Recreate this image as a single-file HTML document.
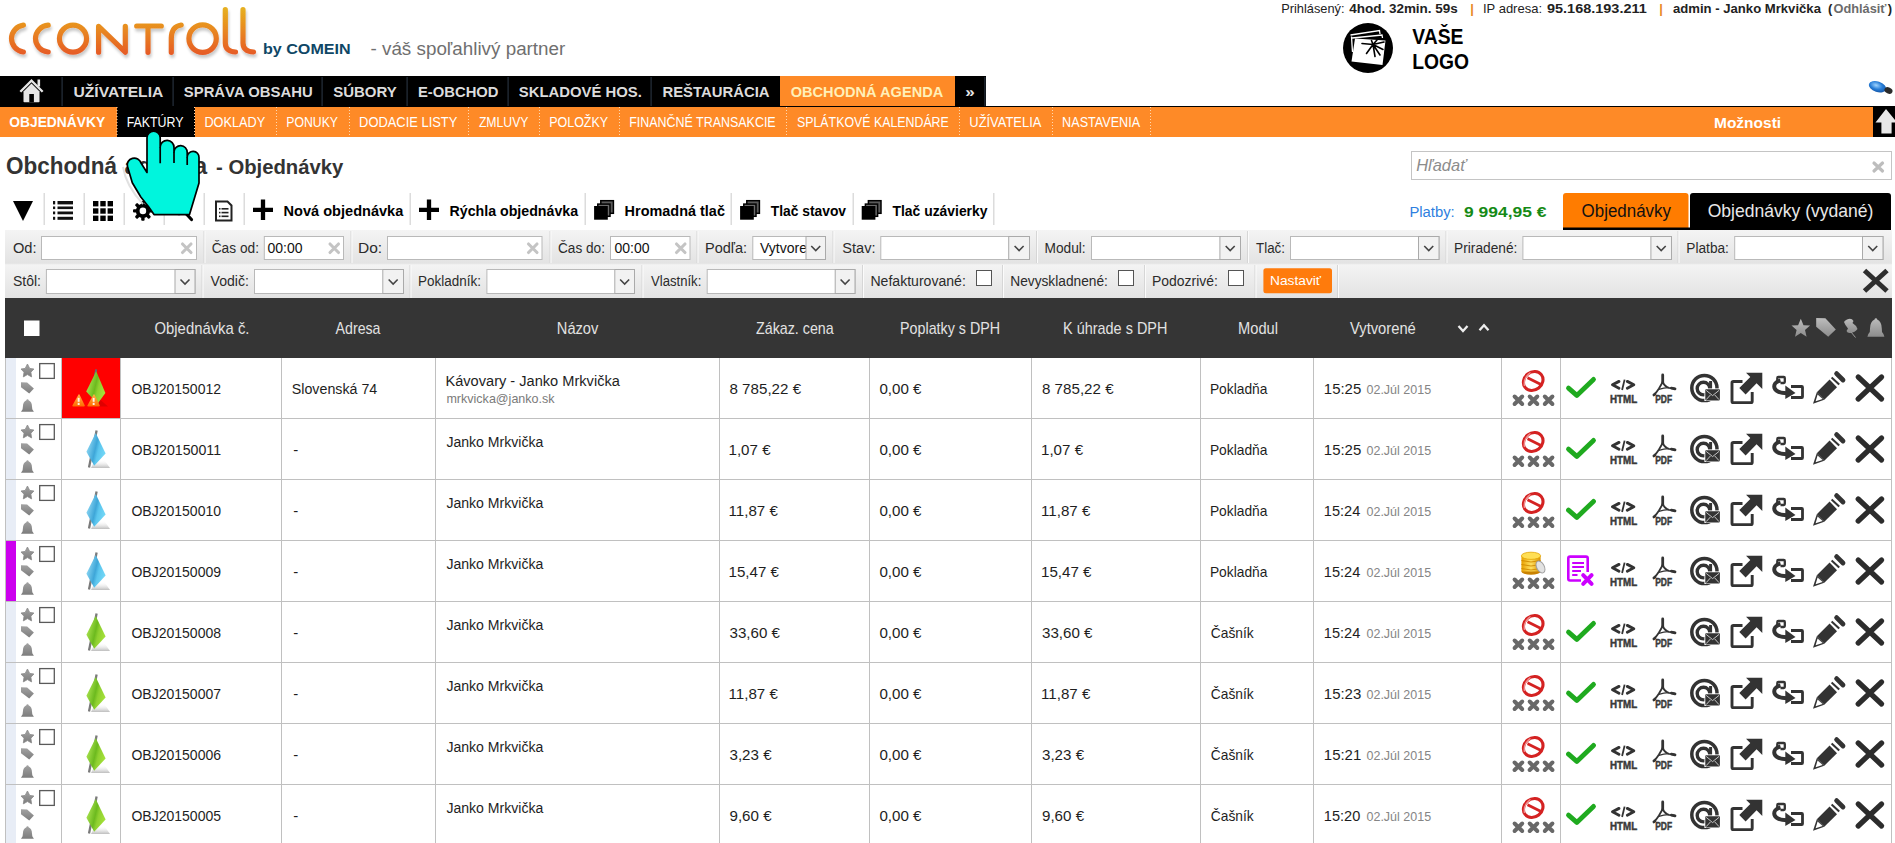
<!DOCTYPE html>
<html><head><meta charset="utf-8"><title>Obchodná agenda - Objednávky</title>
<style>html,body{margin:0;padding:0;background:#fff;overflow:hidden;width:1895px;height:843px}svg{display:block}text{white-space:pre}</style></head>
<body><svg width="1895" height="843" viewBox="0 0 1895 843">
<defs>
<linearGradient id="lg" x1="0" y1="0" x2="0" y2="1"><stop offset="0" stop-color="#eeaa22"/><stop offset="1" stop-color="#e8592a"/></linearGradient>
<linearGradient id="fg" x1="0" y1="0" x2="0" y2="1"><stop offset="0" stop-color="#f4f4f4"/><stop offset="1" stop-color="#e3e3e3"/></linearGradient>
<linearGradient id="gicon" x1="0" y1="0" x2="0" y2="1"><stop offset="0" stop-color="#a2a2a2"/><stop offset="1" stop-color="#7c7c7c"/></linearGradient>
<linearGradient id="hgicon" x1="0" y1="0" x2="0" y2="1"><stop offset="0" stop-color="#8a8a8a"/><stop offset="1" stop-color="#5a5a5a"/></linearGradient>
<linearGradient id="hgicon2" x1="0" y1="0" x2="0" y2="1"><stop offset="0" stop-color="#bdbdbd"/><stop offset="1" stop-color="#8c8c8c"/></linearGradient>
<linearGradient id="blueflag" x1="0" y1="0.2" x2="1" y2="0.6"><stop offset="0" stop-color="#9fe2fa"/><stop offset="0.5" stop-color="#3ea6d8"/><stop offset="0.65" stop-color="#5cc6ee"/><stop offset="1" stop-color="#74d8f6"/></linearGradient>
<linearGradient id="greenflag" x1="0" y1="0.2" x2="1" y2="0.6"><stop offset="0" stop-color="#b8ec5c"/><stop offset="0.5" stop-color="#6cba1e"/><stop offset="0.65" stop-color="#8fd030"/><stop offset="1" stop-color="#a6e23a"/></linearGradient>
<linearGradient id="flagsh" x1="0" y1="0" x2="0" y2="1"><stop offset="0" stop-color="#fff" stop-opacity="0"/><stop offset="1" stop-color="#bdbdbd"/></linearGradient>
<linearGradient id="warn" x1="0" y1="0" x2="0" y2="1"><stop offset="0" stop-color="#ffb347"/><stop offset="1" stop-color="#ff6a00"/></linearGradient>
<linearGradient id="coin" x1="0" y1="0" x2="1" y2="0"><stop offset="0" stop-color="#e8a000"/><stop offset="0.5" stop-color="#ffe060"/><stop offset="1" stop-color="#d89000"/></linearGradient>
<radialGradient id="mouse" cx="0.4" cy="0.4" r="0.7"><stop offset="0" stop-color="#9fd4ff"/><stop offset="0.5" stop-color="#2a7fd8"/><stop offset="1" stop-color="#0e4e9e"/></radialGradient>
<filter id="sh" x="-10%" y="-20%" width="130%" height="160%"><feGaussianBlur in="SourceAlpha" stdDeviation="1.6"/><feOffset dx="0.5" dy="2.5"/><feComponentTransfer><feFuncA type="linear" slope="0.22"/></feComponentTransfer><feMerge><feMergeNode/><feMergeNode in="SourceGraphic"/></feMerge></filter>
<linearGradient id="lgu" gradientUnits="userSpaceOnUse" x1="0" y1="8" x2="0" y2="55"><stop offset="0" stop-color="#e6b020"/><stop offset="0.35" stop-color="#e8921f"/><stop offset="1" stop-color="#e65a26"/></linearGradient>
<symbol id="star" viewBox="0 0 24 24"><path d="M12 1.5l3.1 6.6 7.2.9-5.3 4.9 1.4 7.1L12 17.5l-6.4 3.5 1.4-7.1L1.7 9l7.2-.9z"/></symbol>
</defs>
<g filter="url(#sh)" fill="none" stroke="url(#lgu)" stroke-width="5.2" stroke-linecap="round" stroke-linejoin="round"><path d="M23.4,25.2 A13.8,13.5 0 0 0 11.5,38.6 A13.8,13.5 0 0 0 23.4,52"/><path d="M48.2,25.2 A13.8,13.5 0 0 0 35.5,38.6 A13.8,13.5 0 0 0 48.2,52"/><ellipse cx="73" cy="38.6" rx="13.55" ry="13.5"/><path d="M98.6,52.2 L98.6,26.3 L125.3,52.2 L125.3,26.3"/><path d="M136.7,26 L161.3,26 M148,26 L148,52.3"/><path d="M171.3,52.3 L171.3,38 Q171.5,26.5 181.2,25"/><ellipse cx="202.6" cy="38.6" rx="13.7" ry="13.7"/><path d="M225.3,9.7 L225.3,43 Q225.5,51.5 235.5,52"/><path d="M243,9.7 L243,43 Q243.2,51.5 253.6,52"/></g>
<text transform="translate(263.00,54) scale(1.1495,1)" style="font-family:'Liberation Sans';font-size:14px;font-weight:bold;" fill="#0f4766" >by COMEIN</text>
<text transform="translate(370.50,55.4) scale(1.0175,1)" style="font-family:'Liberation Sans';font-size:18.5px;" fill="#6f6f6f" >- váš spoľahlivý partner</text>
<text transform="translate(1281.21,13) scale(0.9857,1)" style="font-family:'Liberation Sans';font-size:13px;" fill="#222" >Prihlásený:</text>
<text transform="translate(1349.20,13) scale(1.0380,1)" style="font-family:'Liberation Sans';font-size:13px;font-weight:bold;" fill="#222" >4hod. 32min. 59s</text>
<text x="1470.30" y="13" style="font-family:'Liberation Sans';font-size:13px;font-weight:bold;" fill="#e8891f" >|</text>
<text x="1483.00" y="13" style="font-family:'Liberation Sans';font-size:13px;" fill="#222" >IP adresa:</text>
<text transform="translate(1547.00,13) scale(1.1128,1)" style="font-family:'Liberation Sans';font-size:13px;font-weight:bold;" fill="#222" >95.168.193.211</text>
<text x="1659.20" y="13" style="font-family:'Liberation Sans';font-size:13px;font-weight:bold;" fill="#e8891f" >|</text>
<text transform="translate(1673.00,13) scale(1.0099,1)" style="font-family:'Liberation Sans';font-size:13px;font-weight:bold;" fill="#222" >admin - Janko Mrkvička</text>
<text x="1828.00" y="13" style="font-family:'Liberation Sans';font-size:13px;font-weight:bold;" fill="#222" >(</text>
<text transform="translate(1833.50,13) scale(0.9821,1)" style="font-family:'Liberation Sans';font-size:13px;font-weight:bold;" fill="#6b6b6b" >Odhlásiť</text>
<text x="1887.80" y="13" style="font-family:'Liberation Sans';font-size:13px;font-weight:bold;" fill="#222" >)</text>
<circle cx="1368" cy="48" r="25" fill="#000"/>
<g fill="none" stroke="#fff" stroke-width="1.3"><path d="M1350.5,35 L1379.5,30.5 L1380,34"/><path d="M1351.5,36.5 L1352.5,52"/><path d="M1352,38 L1382,35 L1382.5,38"/></g>
<path d="M1355,38.5 L1385.5,40.5 L1382.5,65 L1351.5,61.5 Z" fill="#fff"/>
<g stroke="#000" stroke-width="1.6" stroke-linecap="round" fill="none"><path d="M1362,43.5 L1373,44.5 M1373,44.5 L1384,42 M1373,44.5 L1383,49.5 M1373,44.5 L1380,55 M1373,44.5 L1375,56.5 M1373,44.5 L1366.5,53.5 M1373,44.5 L1371.5,40.5 M1373,44.5 L1377,40"/></g>
<text transform="translate(1412.30,44.1) scale(0.8575,1)" style="font-family:'Liberation Sans';font-size:22.5px;font-weight:bold;" fill="#000" >VAŠE</text>
<text transform="translate(1412.14,69) scale(0.8572,1)" style="font-family:'Liberation Sans';font-size:22.5px;font-weight:bold;" fill="#000" >LOGO</text>
<ellipse cx="1877.5" cy="86.8" rx="9" ry="5.2" transform="rotate(18 1877.5 86.8)" fill="url(#mouse)"/>
<ellipse cx="1888.5" cy="90.5" rx="4.2" ry="3" transform="rotate(25 1888.5 90.5)" fill="#2b2b2b"/>
<rect x="0" y="76" width="986" height="31" fill="#000" />
<rect x="0" y="106" width="1895" height="1" fill="#000" />
<rect x="780" y="76" width="175" height="30" fill="#fe8a27" />
<rect x="61.5" y="77" width="1.2" height="29" fill="#26303c"/>
<rect x="172.5" y="77" width="1.2" height="29" fill="#26303c"/>
<rect x="321.5" y="77" width="1.2" height="29" fill="#26303c"/>
<rect x="406.5" y="77" width="1.2" height="29" fill="#26303c"/>
<rect x="507.5" y="77" width="1.2" height="29" fill="#26303c"/>
<rect x="650.5" y="77" width="1.2" height="29" fill="#26303c"/>
<rect x="984.3" y="77" width="1.2" height="29" fill="#26303c"/>
<g fill="#e6e6e6"><path d="M19.5,91 L31.5,79 L43.5,91 L41.8,92.6 L31.5,82.3 L21.2,92.6 Z"/><rect x="37.5" y="79.5" width="2.6" height="7"/><path d="M23.5,91.5 L31.5,83.5 L39.5,91.5 L39.5,101.5 Q39.5,102.3 38.7,102.3 L24.3,102.3 Q23.5,102.3 23.5,101.5 Z"/></g>
<rect x="29.3" y="94" width="4.6" height="8.3" fill="#000"/>
<text transform="translate(73.50,97) scale(1.0580,1)" style="font-family:'Liberation Sans';font-size:14.8px;font-weight:bold;" fill="#dcdcdc" >UŽÍVATELIA</text>
<text transform="translate(183.80,97) scale(1.0046,1)" style="font-family:'Liberation Sans';font-size:14.8px;font-weight:bold;" fill="#dcdcdc" >SPRÁVA OBSAHU</text>
<text transform="translate(333.20,97) scale(1.0145,1)" style="font-family:'Liberation Sans';font-size:14.8px;font-weight:bold;" fill="#dcdcdc" >SÚBORY</text>
<text x="418.00" y="97" style="font-family:'Liberation Sans';font-size:14.8px;font-weight:bold;" fill="#dcdcdc" >E-OBCHOD</text>
<text transform="translate(518.80,97) scale(1.0050,1)" style="font-family:'Liberation Sans';font-size:14.8px;font-weight:bold;" fill="#dcdcdc" >SKLADOVÉ HOS.</text>
<text transform="translate(662.40,97) scale(1.0065,1)" style="font-family:'Liberation Sans';font-size:14.8px;font-weight:bold;" fill="#dcdcdc" >REŠTAURÁCIA</text>
<text transform="translate(790.70,97) scale(0.9860,1)" style="font-family:'Liberation Sans';font-size:14.8px;font-weight:bold;" fill="#fff0b8" >OBCHODNÁ AGENDA</text>
<text transform="translate(965.30,96.5) scale(1.2125,1)" style="font-family:'Liberation Sans';font-size:14px;font-weight:bold;" fill="#e6e6e6" >»</text>
<rect x="0" y="107" width="1873" height="30" fill="#fe8a27" />
<rect x="1873" y="107" width="22" height="30" fill="#000" />
<rect x="117" y="107" width="78" height="30" fill="#000" />
<path d="M1886,109 L1897,122.5 L1891.6,122.5 L1891.6,133.4 L1881.4,133.4 L1881.4,122.5 L1875.5,122.5 Z" fill="#e8e8e8"/>
<line x1="117" y1="107" x2="117" y2="137" stroke="#ffd9b0" stroke-width="1" stroke-dasharray="1,2"/>
<line x1="194.5" y1="107" x2="194.5" y2="137" stroke="#ffd9b0" stroke-width="1" stroke-dasharray="1,2"/>
<line x1="276.5" y1="107" x2="276.5" y2="137" stroke="#ffd9b0" stroke-width="1" stroke-dasharray="1,2"/>
<line x1="349.5" y1="107" x2="349.5" y2="137" stroke="#ffd9b0" stroke-width="1" stroke-dasharray="1,2"/>
<line x1="468.5" y1="107" x2="468.5" y2="137" stroke="#ffd9b0" stroke-width="1" stroke-dasharray="1,2"/>
<line x1="539.5" y1="107" x2="539.5" y2="137" stroke="#ffd9b0" stroke-width="1" stroke-dasharray="1,2"/>
<line x1="619.5" y1="107" x2="619.5" y2="137" stroke="#ffd9b0" stroke-width="1" stroke-dasharray="1,2"/>
<line x1="786.5" y1="107" x2="786.5" y2="137" stroke="#ffd9b0" stroke-width="1" stroke-dasharray="1,2"/>
<line x1="959.5" y1="107" x2="959.5" y2="137" stroke="#ffd9b0" stroke-width="1" stroke-dasharray="1,2"/>
<line x1="1052.5" y1="107" x2="1052.5" y2="137" stroke="#ffd9b0" stroke-width="1" stroke-dasharray="1,2"/>
<line x1="1150.5" y1="107" x2="1150.5" y2="137" stroke="#ffd9b0" stroke-width="1" stroke-dasharray="1,2"/>
<text transform="translate(9.25,127) scale(0.9531,1)" style="font-family:'Liberation Sans';font-size:14.5px;font-weight:bold;" fill="#fff" >OBJEDNÁVKY</text>
<text transform="translate(126.63,127) scale(0.8658,1)" style="font-family:'Liberation Sans';font-size:14.3px;" fill="#fff" >FAKTÚRY</text>
<text transform="translate(204.41,127) scale(0.8909,1)" style="font-family:'Liberation Sans';font-size:14.3px;" fill="#fff" >DOKLADY</text>
<text transform="translate(286.34,127) scale(0.8573,1)" style="font-family:'Liberation Sans';font-size:14.3px;" fill="#fff" >PONUKY</text>
<text transform="translate(359.10,127) scale(0.9030,1)" style="font-family:'Liberation Sans';font-size:14.3px;" fill="#fff" >DODACIE LISTY</text>
<text transform="translate(478.90,127) scale(0.8554,1)" style="font-family:'Liberation Sans';font-size:14.3px;" fill="#fff" >ZMLUVY</text>
<text transform="translate(549.13,127) scale(0.8747,1)" style="font-family:'Liberation Sans';font-size:14.3px;" fill="#fff" >POLOŽKY</text>
<text transform="translate(629.13,127) scale(0.8719,1)" style="font-family:'Liberation Sans';font-size:14.3px;" fill="#fff" >FINANČNÉ TRANSAKCIE</text>
<text transform="translate(797.00,127) scale(0.8648,1)" style="font-family:'Liberation Sans';font-size:14.3px;" fill="#fff" >SPLÁTKOVÉ KALENDÁRE</text>
<text transform="translate(969.30,127) scale(0.9044,1)" style="font-family:'Liberation Sans';font-size:14.3px;" fill="#fff" >UŽÍVATELIA</text>
<text transform="translate(1062.12,127) scale(0.8827,1)" style="font-family:'Liberation Sans';font-size:14.3px;" fill="#fff" >NASTAVENIA</text>
<text transform="translate(1713.97,127.5) scale(1.0342,1)" style="font-family:'Liberation Sans';font-size:15px;font-weight:bold;" fill="#fff" >Možnosti</text>
<text transform="translate(5.90,174) scale(0.9378,1)" style="font-family:'Liberation Sans';font-size:24px;font-weight:bold;" fill="#333" >Obchodná</text>
<text transform="translate(124.50,174) scale(0.9838,1)" style="font-family:'Liberation Sans';font-size:24px;font-weight:bold;" fill="#333" >agenda</text>
<text transform="translate(216.00,174) scale(1.0407,1)" style="font-family:'Liberation Sans';font-size:19.5px;font-weight:bold;" fill="#333" >- Objednávky</text>
<rect x="1411.5" y="151.5" width="480" height="28" fill="#fff" stroke="#c4c4c4" stroke-width="1"/>
<text transform="translate(1416.20,171.1) scale(1.0286,1)" style="font-family:'Liberation Sans';font-size:16px;font-style:italic;" fill="#8c8c8c" >Hľadať</text>
<path d="M1874,163 L1882.5,171 M1882.5,163 L1874,171" stroke="#bdbdbd" stroke-width="3.2" stroke-linecap="round"/>
<rect x="43.5" y="193" width="1.5" height="32" fill="#dcdcdc"/>
<rect x="83.5" y="193" width="1.5" height="32" fill="#dcdcdc"/>
<rect x="123.5" y="193" width="1.5" height="32" fill="#dcdcdc"/>
<rect x="163.5" y="193" width="1.5" height="32" fill="#dcdcdc"/>
<rect x="203.5" y="193" width="1.5" height="32" fill="#dcdcdc"/>
<rect x="243.5" y="193" width="1.5" height="32" fill="#dcdcdc"/>
<rect x="409.5" y="193" width="1.5" height="32" fill="#dcdcdc"/>
<rect x="584.5" y="193" width="1.5" height="32" fill="#dcdcdc"/>
<rect x="730.5" y="193" width="1.5" height="32" fill="#dcdcdc"/>
<rect x="852.5" y="193" width="1.5" height="32" fill="#dcdcdc"/>
<rect x="993.0" y="193" width="1.5" height="32" fill="#dcdcdc"/>
<path d="M13,201 L33,201 L23,221 Z" fill="#000"/>
<g fill="#111"><rect x="53" y="201" width="2.2" height="3.4"/><rect x="57.5" y="201" width="15.5" height="3.4"/><rect x="53" y="206.5" width="2.2" height="2.6"/><rect x="57.5" y="206.5" width="15.5" height="2.6"/><rect x="53" y="211.5" width="2.2" height="2.8"/><rect x="57.5" y="211.5" width="15.5" height="2.8"/><rect x="53" y="216.8" width="2.2" height="3"/><rect x="57.5" y="216.8" width="15.5" height="3"/></g>
<g fill="#000"><rect x="93.0" y="201.0" width="5.4" height="5.4"/><rect x="100.3" y="201.0" width="5.4" height="5.4"/><rect x="107.6" y="201.0" width="5.4" height="5.4"/><rect x="93.0" y="208.3" width="5.4" height="5.4"/><rect x="100.3" y="208.3" width="5.4" height="5.4"/><rect x="107.6" y="208.3" width="5.4" height="5.4"/><rect x="93.0" y="215.6" width="5.4" height="5.4"/><rect x="100.3" y="215.6" width="5.4" height="5.4"/><rect x="107.6" y="215.6" width="5.4" height="5.4"/></g>
<g transform="translate(142.9,210.9)" fill="#000"><rect x="-1.7" y="-9.9" width="3.4" height="5" rx="1" transform="rotate(0)"/><rect x="-1.7" y="-9.9" width="3.4" height="5" rx="1" transform="rotate(45)"/><rect x="-1.7" y="-9.9" width="3.4" height="5" rx="1" transform="rotate(90)"/><rect x="-1.7" y="-9.9" width="3.4" height="5" rx="1" transform="rotate(135)"/><rect x="-1.7" y="-9.9" width="3.4" height="5" rx="1" transform="rotate(180)"/><rect x="-1.7" y="-9.9" width="3.4" height="5" rx="1" transform="rotate(225)"/><rect x="-1.7" y="-9.9" width="3.4" height="5" rx="1" transform="rotate(270)"/><rect x="-1.7" y="-9.9" width="3.4" height="5" rx="1" transform="rotate(315)"/><circle r="7.1"/><circle r="3.3" fill="#fff"/></g>
<g fill="none" stroke="#000" stroke-width="2.6"><circle cx="179" cy="206.5" r="7.5"/><path d="M185,212.5 L191.5,219.5" stroke-width="3.2" stroke-linecap="round"/></g>
<path d="M216,201.5 L227.5,201.5 L231.5,205.5 L231.5,220.5 L216,220.5 Z" fill="none" stroke="#222" stroke-width="2"/>
<g fill="#222"><rect x="219" y="208" width="1.5" height="1.6"/><rect x="221.5" y="208" width="7" height="1.6"/><rect x="219" y="211.8" width="1.5" height="1.6"/><rect x="221.5" y="211.8" width="7" height="1.6"/><rect x="219" y="215.5" width="1.5" height="1.6"/><rect x="221.5" y="215.5" width="7" height="1.6"/></g>
<path d="M253,209.8 L273,209.8 M263,199.6 L263,220" stroke="#000" stroke-width="4.3"/>
<path d="M419,209.8 L439,209.8 M429,199.6 L429,220" stroke="#000" stroke-width="4.3"/>
<text transform="translate(283.60,215.9) scale(1.0410,1)" style="font-family:'Liberation Sans';font-size:14px;font-weight:bold;" fill="#000" >Nová objednávka</text>
<text transform="translate(449.50,215.9) scale(1.0146,1)" style="font-family:'Liberation Sans';font-size:14px;font-weight:bold;" fill="#000" >Rýchla objednávka</text>
<g transform="translate(594,199.6)"><rect x="6.8" y="1.1" width="12.6" height="12.6" fill="#5a5a5a" stroke="#000" stroke-width="1.5"/><rect x="3.8" y="4.5" width="12.2" height="12.2" fill="#6a6a6a" stroke="#000" stroke-width="1.5"/><rect x="0.1" y="6.4" width="13.7" height="13.7" fill="#000"/></g>
<g transform="translate(740,199.6)"><rect x="6.8" y="1.1" width="12.6" height="12.6" fill="#5a5a5a" stroke="#000" stroke-width="1.5"/><rect x="3.8" y="4.5" width="12.2" height="12.2" fill="#6a6a6a" stroke="#000" stroke-width="1.5"/><rect x="0.1" y="6.4" width="13.7" height="13.7" fill="#000"/></g>
<g transform="translate(861.6,199.6)"><rect x="6.8" y="1.1" width="12.6" height="12.6" fill="#5a5a5a" stroke="#000" stroke-width="1.5"/><rect x="3.8" y="4.5" width="12.2" height="12.2" fill="#6a6a6a" stroke="#000" stroke-width="1.5"/><rect x="0.1" y="6.4" width="13.7" height="13.7" fill="#000"/></g>
<text transform="translate(624.60,215.9) scale(1.0322,1)" style="font-family:'Liberation Sans';font-size:14px;font-weight:bold;" fill="#000" >Hromadná tlač</text>
<text transform="translate(770.70,215.9) scale(0.9899,1)" style="font-family:'Liberation Sans';font-size:14px;font-weight:bold;" fill="#000" >Tlač stavov</text>
<text transform="translate(892.50,215.9) scale(0.9934,1)" style="font-family:'Liberation Sans';font-size:14px;font-weight:bold;" fill="#000" >Tlač uzávierky</text>
<text transform="translate(1409.44,216.8) scale(0.9561,1)" style="font-family:'Liberation Sans';font-size:15.5px;" fill="#2e7fe0" >Platby:</text>
<text transform="translate(1464.00,216.8) scale(1.1271,1)" style="font-family:'Liberation Sans';font-size:15.5px;font-weight:bold;" fill="#158a15" >9 994,95 €</text>
<path d="M1563,229 L1563,196 Q1563,193 1566,193 L1685.5,193 Q1688.5,193 1688.5,196 L1688.5,229 Z" fill="#ff7c00"/>
<path d="M1690,229 L1690,196 Q1690,193 1693,193 L1888,193 Q1891,193 1891,196 L1891,229 Z" fill="#000"/>
<rect x="1563" y="227.5" width="328" height="2.5" fill="#000" />
<text transform="translate(1581.60,216.8) scale(0.9152,1)" style="font-family:'Liberation Sans';font-size:18.5px;" fill="#111" >Objednávky</text>
<text transform="translate(1707.70,216.8) scale(0.9488,1)" style="font-family:'Liberation Sans';font-size:18.5px;" fill="#e8e8e8" >Objednávky (vydané)</text>
<rect x="5" y="230" width="1887" height="34" fill="url(#fg)" />
<rect x="5" y="264" width="1887" height="34" fill="url(#fg)" />
<rect x="5" y="263.5" width="1887" height="0.8" fill="#e9e9e9" />
<rect x="203.5" y="231" width="1" height="32" fill="#d6d6d6"/><rect x="204.5" y="231" width="1" height="32" fill="#fbfbfb"/>
<rect x="350.5" y="231" width="1" height="32" fill="#d6d6d6"/><rect x="351.5" y="231" width="1" height="32" fill="#fbfbfb"/>
<rect x="549.5" y="231" width="1" height="32" fill="#d6d6d6"/><rect x="550.5" y="231" width="1" height="32" fill="#fbfbfb"/>
<rect x="696.5" y="231" width="1" height="32" fill="#d6d6d6"/><rect x="697.5" y="231" width="1" height="32" fill="#fbfbfb"/>
<rect x="832.5" y="231" width="1" height="32" fill="#d6d6d6"/><rect x="833.5" y="231" width="1" height="32" fill="#fbfbfb"/>
<rect x="1036.0" y="231" width="1" height="32" fill="#d6d6d6"/><rect x="1037.0" y="231" width="1" height="32" fill="#fbfbfb"/>
<rect x="1247.0" y="231" width="1" height="32" fill="#d6d6d6"/><rect x="1248.0" y="231" width="1" height="32" fill="#fbfbfb"/>
<rect x="1445.5" y="231" width="1" height="32" fill="#d6d6d6"/><rect x="1446.5" y="231" width="1" height="32" fill="#fbfbfb"/>
<rect x="1677.5" y="231" width="1" height="32" fill="#d6d6d6"/><rect x="1678.5" y="231" width="1" height="32" fill="#fbfbfb"/>
<rect x="201.5" y="265" width="1" height="33" fill="#d6d6d6"/><rect x="202.5" y="265" width="1" height="33" fill="#fbfbfb"/>
<rect x="409.5" y="265" width="1" height="33" fill="#d6d6d6"/><rect x="410.5" y="265" width="1" height="33" fill="#fbfbfb"/>
<rect x="641.5" y="265" width="1" height="33" fill="#d6d6d6"/><rect x="642.5" y="265" width="1" height="33" fill="#fbfbfb"/>
<rect x="862.0" y="265" width="1" height="33" fill="#d6d6d6"/><rect x="863.0" y="265" width="1" height="33" fill="#fbfbfb"/>
<rect x="1002.0" y="265" width="1" height="33" fill="#d6d6d6"/><rect x="1003.0" y="265" width="1" height="33" fill="#fbfbfb"/>
<rect x="1144.0" y="265" width="1" height="33" fill="#d6d6d6"/><rect x="1145.0" y="265" width="1" height="33" fill="#fbfbfb"/>
<rect x="1254.5" y="265" width="1" height="33" fill="#d6d6d6"/><rect x="1255.5" y="265" width="1" height="33" fill="#fbfbfb"/>
<rect x="1337.0" y="265" width="1" height="33" fill="#d6d6d6"/><rect x="1338.0" y="265" width="1" height="33" fill="#fbfbfb"/>
<text transform="translate(12.90,252.8) scale(1.0115,1)" style="font-family:'Liberation Sans';font-size:14.5px;" fill="#2b2b2b" >Od:</text>
<rect x="41.5" y="236.5" width="155" height="23" fill="#fff" stroke="#b9b9b9" stroke-width="1"/>
<path d="M182.5,244 L191.0,252.5 M191.0,244 L182.5,252.5" stroke="#c4c4c4" stroke-width="3.1" stroke-linecap="round"/>
<text transform="translate(211.70,252.8) scale(0.9460,1)" style="font-family:'Liberation Sans';font-size:14.5px;" fill="#2b2b2b" >Čas od:</text>
<rect x="264.3" y="236.5" width="79.19999999999999" height="23" fill="#fff" stroke="#b9b9b9" stroke-width="1"/>
<text x="267.50" y="253.3" style="font-family:'Liberation Sans';font-size:14px;" fill="#111" >00:00</text>
<path d="M330,244 L338.5,252.5 M338.5,244 L330,252.5" stroke="#c4c4c4" stroke-width="3.1" stroke-linecap="round"/>
<text transform="translate(357.93,252.8) scale(1.0713,1)" style="font-family:'Liberation Sans';font-size:14.5px;" fill="#2b2b2b" >Do:</text>
<rect x="387.5" y="236.5" width="154.5" height="23" fill="#fff" stroke="#b9b9b9" stroke-width="1"/>
<path d="M528.5,244 L537.0,252.5 M537.0,244 L528.5,252.5" stroke="#c4c4c4" stroke-width="3.1" stroke-linecap="round"/>
<text transform="translate(558.00,252.8) scale(0.9399,1)" style="font-family:'Liberation Sans';font-size:14.5px;" fill="#2b2b2b" >Čas do:</text>
<rect x="610.5" y="236.5" width="79.5" height="23" fill="#fff" stroke="#b9b9b9" stroke-width="1"/>
<text x="614.50" y="253.3" style="font-family:'Liberation Sans';font-size:14px;" fill="#111" >00:00</text>
<path d="M676.5,244 L685.0,252.5 M685.0,244 L676.5,252.5" stroke="#c4c4c4" stroke-width="3.1" stroke-linecap="round"/>
<text x="705.00" y="252.8" style="font-family:'Liberation Sans';font-size:14.5px;" fill="#2b2b2b" >Podľa:</text>
<rect x="752.8" y="236.5" width="72.70000000000005" height="23" fill="#fff" stroke="#b9b9b9" stroke-width="1"/>
<rect x="806.0" y="236.5" width="19.5" height="23" fill="#f2f2f2" stroke="#aaaaaa" stroke-width="1"/>
<path d="M811.25,246.0 L815.75,250.5 L820.25,246.0" fill="none" stroke="#444" stroke-width="1.6"/>
<clipPath id="cp752"><rect x="752.3" y="236" width="53.200000000000045" height="24"/></clipPath>
<text x="760.00" y="253.3" style="font-family:'Liberation Sans';font-size:14px;" fill="#111" clip-path="url(#cp752)">Vytvorené</text>
<text transform="translate(842.30,252.8) scale(1.0058,1)" style="font-family:'Liberation Sans';font-size:14.5px;" fill="#2b2b2b" >Stav:</text>
<rect x="880.8" y="236.5" width="148.70000000000005" height="23" fill="#fff" stroke="#b9b9b9" stroke-width="1"/>
<rect x="1008.7" y="236.5" width="20.799999999999955" height="23" fill="#f2f2f2" stroke="#aaaaaa" stroke-width="1"/>
<path d="M1014.6,246.0 L1019.1,250.5 L1023.6,246.0" fill="none" stroke="#444" stroke-width="1.6"/>
<text transform="translate(1044.45,252.8) scale(0.9472,1)" style="font-family:'Liberation Sans';font-size:14.5px;" fill="#2b2b2b" >Modul:</text>
<rect x="1091.5" y="236.5" width="149" height="23" fill="#fff" stroke="#b9b9b9" stroke-width="1"/>
<rect x="1219.9" y="236.5" width="20.59999999999991" height="23" fill="#f2f2f2" stroke="#aaaaaa" stroke-width="1"/>
<path d="M1225.7,246.0 L1230.2,250.5 L1234.7,246.0" fill="none" stroke="#444" stroke-width="1.6"/>
<text transform="translate(1256.00,252.8) scale(0.9213,1)" style="font-family:'Liberation Sans';font-size:14.5px;" fill="#2b2b2b" >Tlač:</text>
<rect x="1290.5" y="236.5" width="148.5" height="23" fill="#fff" stroke="#b9b9b9" stroke-width="1"/>
<rect x="1418.5" y="236.5" width="20.5" height="23" fill="#f2f2f2" stroke="#aaaaaa" stroke-width="1"/>
<path d="M1424.25,246.0 L1428.75,250.5 L1433.25,246.0" fill="none" stroke="#444" stroke-width="1.6"/>
<text transform="translate(1454.05,252.8) scale(0.9465,1)" style="font-family:'Liberation Sans';font-size:14.5px;" fill="#2b2b2b" >Priradené:</text>
<rect x="1522.9" y="236.5" width="148.5999999999999" height="23" fill="#fff" stroke="#b9b9b9" stroke-width="1"/>
<rect x="1650.9" y="236.5" width="20.59999999999991" height="23" fill="#f2f2f2" stroke="#aaaaaa" stroke-width="1"/>
<path d="M1656.7,246.0 L1661.2,250.5 L1665.7,246.0" fill="none" stroke="#444" stroke-width="1.6"/>
<text transform="translate(1686.36,252.8) scale(0.9440,1)" style="font-family:'Liberation Sans';font-size:14.5px;" fill="#2b2b2b" >Platba:</text>
<rect x="1734.7" y="236.5" width="148.29999999999995" height="23" fill="#fff" stroke="#b9b9b9" stroke-width="1"/>
<rect x="1862.5" y="236.5" width="20.5" height="23" fill="#f2f2f2" stroke="#aaaaaa" stroke-width="1"/>
<path d="M1868.25,246.0 L1872.75,250.5 L1877.25,246.0" fill="none" stroke="#444" stroke-width="1.6"/>
<text transform="translate(12.90,285.6) scale(0.9684,1)" style="font-family:'Liberation Sans';font-size:14.5px;" fill="#2b2b2b" >Stôl:</text>
<rect x="46.4" y="269.5" width="148.6" height="24" fill="#fff" stroke="#b9b9b9" stroke-width="1"/>
<rect x="175.0" y="269.5" width="20.0" height="24" fill="#f2f2f2" stroke="#aaaaaa" stroke-width="1"/>
<path d="M180.5,279.5 L185.0,284.0 L189.5,279.5" fill="none" stroke="#444" stroke-width="1.6"/>
<text transform="translate(210.60,285.6) scale(0.9722,1)" style="font-family:'Liberation Sans';font-size:14.5px;" fill="#2b2b2b" >Vodič:</text>
<rect x="254.5" y="269.5" width="149" height="24" fill="#fff" stroke="#b9b9b9" stroke-width="1"/>
<rect x="382.8" y="269.5" width="20.69999999999999" height="24" fill="#f2f2f2" stroke="#aaaaaa" stroke-width="1"/>
<path d="M388.65,279.5 L393.15,284.0 L397.65,279.5" fill="none" stroke="#444" stroke-width="1.6"/>
<text transform="translate(418.07,285.6) scale(0.9288,1)" style="font-family:'Liberation Sans';font-size:14.5px;" fill="#2b2b2b" >Pokladník:</text>
<rect x="486.9" y="269.5" width="147.60000000000002" height="24" fill="#fff" stroke="#b9b9b9" stroke-width="1"/>
<rect x="614.8" y="269.5" width="19.700000000000045" height="24" fill="#f2f2f2" stroke="#aaaaaa" stroke-width="1"/>
<path d="M620.15,279.5 L624.65,284.0 L629.15,279.5" fill="none" stroke="#444" stroke-width="1.6"/>
<text transform="translate(651.00,285.6) scale(0.9051,1)" style="font-family:'Liberation Sans';font-size:14.5px;" fill="#2b2b2b" >Vlastník:</text>
<rect x="707.2" y="269.5" width="147.79999999999995" height="24" fill="#fff" stroke="#b9b9b9" stroke-width="1"/>
<rect x="835.2" y="269.5" width="19.799999999999955" height="24" fill="#f2f2f2" stroke="#aaaaaa" stroke-width="1"/>
<path d="M840.6,279.5 L845.1,284.0 L849.6,279.5" fill="none" stroke="#444" stroke-width="1.6"/>
<text transform="translate(870.43,285.6) scale(0.9709,1)" style="font-family:'Liberation Sans';font-size:14.5px;" fill="#2b2b2b" >Nefakturované:</text>
<rect x="976.5" y="270.5" width="15" height="15" fill="#fff" stroke="#555" stroke-width="1"/>
<text transform="translate(1010.25,285.6) scale(0.9472,1)" style="font-family:'Liberation Sans';font-size:14.5px;" fill="#2b2b2b" >Nevyskladnené:</text>
<rect x="1118.5" y="270.5" width="15" height="15" fill="#fff" stroke="#555" stroke-width="1"/>
<text transform="translate(1152.04,285.6) scale(0.9627,1)" style="font-family:'Liberation Sans';font-size:14.5px;" fill="#2b2b2b" >Podozrivé:</text>
<rect x="1228.5" y="270.5" width="15" height="15" fill="#fff" stroke="#555" stroke-width="1"/>
<rect x="1263.4" y="268.2" width="68.6" height="25.1" rx="2.5" fill="#ff7b0c"/>
<text transform="translate(1269.98,285) scale(1.0197,1)" style="font-family:'Liberation Sans';font-size:13.5px;" fill="#fff" >Nastaviť</text>
<path d="M1864.5,270.5 L1887,291 M1887,270.5 L1864.5,291" stroke="#2e2e2e" stroke-width="5"/>
<rect x="5" y="298" width="1887" height="60" fill="#353535" />
<rect x="24" y="320.5" width="15.5" height="15.5" fill="#fff" />
<text transform="translate(154.50,334.3) scale(0.9408,1)" style="font-family:'Liberation Sans';font-size:15.8px;" fill="#e2e2e2" >Objednávka č.</text>
<text transform="translate(335.60,334.3) scale(0.8972,1)" style="font-family:'Liberation Sans';font-size:15.8px;" fill="#e2e2e2" >Adresa</text>
<text transform="translate(556.87,334.3) scale(0.9253,1)" style="font-family:'Liberation Sans';font-size:15.8px;" fill="#e2e2e2" >Názov</text>
<text transform="translate(756.00,334.3) scale(0.9042,1)" style="font-family:'Liberation Sans';font-size:15.8px;" fill="#e2e2e2" >Zákaz. cena</text>
<text transform="translate(900.10,334.3) scale(0.9038,1)" style="font-family:'Liberation Sans';font-size:15.8px;" fill="#e2e2e2" >Poplatky s DPH</text>
<text transform="translate(1063.09,334.3) scale(0.9137,1)" style="font-family:'Liberation Sans';font-size:15.8px;" fill="#e2e2e2" >K úhrade s DPH</text>
<text transform="translate(1238.07,334.3) scale(0.9274,1)" style="font-family:'Liberation Sans';font-size:15.8px;" fill="#e2e2e2" >Modul</text>
<text transform="translate(1350.00,334.3) scale(0.9328,1)" style="font-family:'Liberation Sans';font-size:15.8px;" fill="#e2e2e2" >Vytvorené</text>
<path d="M1458.5,326 L1463,331 L1467.5,326" fill="none" stroke="#eee" stroke-width="2.3"/>
<path d="M1479.5,330.2 L1484,325.2 L1488.5,330.2" fill="none" stroke="#eee" stroke-width="2.3"/>
<g fill="url(#hgicon2)"><path d="M1800.8,318.8 L1803.5,325.3 L1810.1,325.6 L1805,330 L1806.6,336.8 L1800.8,333 L1795,336.8 L1796.6,330 L1791.5,325.6 L1798.1,325.3 Z"/><path d="M1816.2,318 L1825.4,318.2 L1835.8,329.5 L1828.2,336.8 L1816.2,326.7 Z"/><path d="M1847,319.5 Q1851.5,317.5 1853.5,321 L1852.5,323 Q1856.5,325.5 1857.5,329 Q1855,332.5 1850.5,333 Q1847.5,333.5 1846.5,331 L1848,328.5 Q1845,325 1844,322 Q1844.5,320.5 1847,319.5 Z"/><path d="M1875.9,318.2 Q1877.2,318.2 1877.2,319.6 Q1881.6,321.6 1881.8,328.5 L1882,332 Q1884.4,334.6 1884.4,336.8 L1867.4,336.8 Q1867.4,334.6 1869.8,332 L1870,328.5 Q1870.2,321.6 1874.6,319.6 Q1874.6,318.2 1875.9,318.2 Z"/></g>
<path d="M1851,332 L1855.5,337.5" stroke="#9a9a9a" stroke-width="1"/>
<rect x="5" y="358" width="1887" height="60" fill="#fff" />
<rect x="6" y="358" width="10" height="60" fill="#e8edf6" />
<rect x="5" y="418" width="1887" height="1" fill="#c0c0c0" />
<g transform="translate(0,358)"><g fill="url(#gicon)"><path d="M27.45,6 L29.7,10.4 L33.9,11 L30.9,14.2 L31.6,18.9 L27.45,16.6 L23.3,18.9 L24,14.2 L21,11 L25.2,10.4 Z" stroke="#8a8a8a" stroke-width="0.8" stroke-linejoin="round"/><path d="M21,24.2 L27.1,24.6 L33.9,30.6 L29.2,35.6 L21,29.2 Z"/><path d="M27.5,41.2 Q28.6,41.2 28.6,42.3 Q31.9,43.6 32,48.5 L32.3,51.2 L33.9,53.8 L21,53.8 L22.6,51.2 L22.9,48.5 Q23,43.6 26.4,42.3 Q26.4,41.2 27.5,41.2 Z"/></g><rect x="39.7" y="5.6" width="14.6" height="14.8" fill="#fff" stroke="#5a5a5a" stroke-width="1.3"/></g>
<rect x="62" y="358" width="58" height="60" fill="#ff0000" />
<g transform="translate(0,358)"><path d="M96,38 L108,48.5 L92,48.5 Z" fill="#c00000" opacity="0.5"/><path d="M96.2,11.4 L93.5,25" stroke="#667" stroke-width="2"/><path d="M96.2,13.2 L86.2,33.5 L97.6,45.7 L105.4,34.9 Z" fill="url(#greenflag)"/></g>
<g transform="translate(0,358)"><path d="M78.5,36.5 Q79.1,36 79.6,36.7 L84.8,47.6 Q84.89999999999999,48.6 83.89999999999999,48.6 L73.2,48.6 Q72.2,48.6 72.39999999999999,47.6 Z" fill="url(#warn)"/><rect x="77.7" y="39.9" width="1.9" height="3.9" fill="#fff" opacity="0.9"/><rect x="77.7" y="44.8" width="1.9" height="2.2" fill="#fff" opacity="0.9"/></g>
<g transform="translate(0,358)"><path d="M93.5,36.5 Q94.1,36 94.6,36.7 L99.8,47.6 Q99.89999999999999,48.6 98.89999999999999,48.6 L88.2,48.6 Q87.2,48.6 87.39999999999999,47.6 Z" fill="url(#warn)"/><rect x="92.7" y="39.9" width="1.9" height="3.9" fill="#fff" opacity="0.9"/><rect x="92.7" y="44.8" width="1.9" height="2.2" fill="#fff" opacity="0.9"/></g>
<text transform="translate(131.40,393.5) scale(0.9355,1)" style="font-family:'Liberation Sans';font-size:15px;" fill="#1e1e1e" >OBJ20150012</text>
<text transform="translate(291.80,393.5) scale(0.9497,1)" style="font-family:'Liberation Sans';font-size:15px;" fill="#1e1e1e" >Slovenská 74</text>
<text transform="translate(445.43,385.7) scale(0.9739,1)" style="font-family:'Liberation Sans';font-size:15px;" fill="#1e1e1e" >Kávovary - Janko Mrkvička</text>
<text transform="translate(446.40,402.7) scale(0.9657,1)" style="font-family:'Liberation Sans';font-size:13px;" fill="#7a7a7a" >mrkvicka@janko.sk</text>
<text transform="translate(729.50,393.5) scale(1.0100,1)" style="font-family:'Liberation Sans';font-size:15px;" fill="#1e1e1e" >8 785,22 €</text>
<text transform="translate(879.40,393.5) scale(1.0100,1)" style="font-family:'Liberation Sans';font-size:15px;" fill="#1e1e1e" >0,00 €</text>
<text transform="translate(1042.00,393.5) scale(1.0100,1)" style="font-family:'Liberation Sans';font-size:15px;" fill="#1e1e1e" >8 785,22 €</text>
<text transform="translate(1209.88,393.5) scale(0.9200,1)" style="font-family:'Liberation Sans';font-size:15px;" fill="#1e1e1e" >Pokladňa</text>
<text transform="translate(1323.83,393.6) scale(0.9659,1)" style="font-family:'Liberation Sans';font-size:15.5px;" fill="#1e1e1e" >15:25</text>
<text transform="translate(1366.50,393.6) scale(0.9613,1)" style="font-family:'Liberation Sans';font-size:13px;" fill="#858585" >02.Júl 2015</text>
<g transform="translate(0,358)"><ellipse cx="1533.2" cy="23" rx="10.3" ry="8.9" transform="rotate(-38 1533.2 23)" fill="none" stroke="#d42222" stroke-width="3.1"/><path d="M1527.5,19.8 L1541,26.5" stroke="#d42222" stroke-width="2.8"/><path d="M1524.5,28 Q1523,20 1530.5,14.5" fill="none" stroke="#f39a9a" stroke-width="1.4" opacity="0.9"/></g>
<g transform="translate(0,358)"><g stroke="#5c5c5c" stroke-width="4" stroke-linecap="round" opacity="0.92"><path d="M1514.6,38.5 L1522.2,46 M1522.2,38.5 L1514.6,46"/><path d="M1529.7,38.5 L1537.3,46 M1537.3,38.5 L1529.7,46"/><path d="M1544.8,38.5 L1552.4,46 M1552.4,38.5 L1544.8,46"/></g></g>
<g transform="translate(0,358)"><path d="M1568.5,30.1 L1576.8,37.4 L1593.5,21.4" fill="none" stroke="#1faa1f" stroke-width="4.8" stroke-linecap="round" stroke-linejoin="round"/></g>
<g transform="translate(0,358)"><g fill="none" stroke="#333" stroke-width="2.9" stroke-linecap="round" stroke-linejoin="round"><path d="M1619,23.4 L1612.5,26.8 L1619,30.2"/><path d="M1627.3,23.4 L1633.8,26.8 L1627.3,30.2"/></g><path d="M1624.6,21.6 L1622.1,32" stroke="#333" stroke-width="1.8"/></g>
<text transform="translate(1610.00,402.6) scale(0.9761,1)" style="font-family:'Liberation Sans';font-size:10px;font-weight:bold;" fill="#3a3a3a" stroke="#3a3a3a" stroke-width="0.45">HTML</text>
<g transform="translate(0,358)"><g fill="none" stroke="#333" stroke-linecap="round"><path d="M1662.7,17 L1662.7,24.5" stroke-width="2.8"/><path d="M1662.7,24 L1659,30.5 Q1656.5,34.5 1654,36.8" stroke-width="1.8"/><path d="M1655,36 L1653.8,37" stroke-width="2.6"/><path d="M1662.7,24 Q1665,29 1669,29.8 L1674.5,30.6" stroke-width="1.8"/><path d="M1671.5,30.2 L1675,30.8" stroke-width="2.8"/><path d="M1658.8,31.3 Q1664,29.8 1668.5,29.7" stroke-width="1.2"/></g></g>
<text transform="translate(1655.20,402.5) scale(0.8446,1)" style="font-family:'Liberation Sans';font-size:10px;font-weight:bold;" fill="#3a3a3a" stroke="#3a3a3a" stroke-width="0.45">PDF</text>
<g transform="translate(0,358)"><circle cx="1704.4" cy="30" r="12.6" fill="none" stroke="#333" stroke-width="3.5"/><circle cx="1703.5" cy="30.6" r="6.3" fill="none" stroke="#333" stroke-width="3.4"/><path d="M1710.6,23 L1710.6,33" stroke="#333" stroke-width="3"/><rect x="1704.4" y="30.4" width="16" height="12.6" fill="#fff"/><rect x="1705.3" y="31.2" width="14.6" height="11.2" rx="0.8" fill="#333"/><path d="M1706.2,32.4 L1712.6,37.6 L1719,32.4 M1706.2,41.6 L1710.4,37 M1719,41.6 L1714.8,37" fill="none" stroke="#d6d6d6" stroke-width="0.9"/></g>
<g transform="translate(0,358)"><path d="M1742.5,23.5 L1733.4,23.5 Q1732,23.5 1732,24.9 L1732,43.2 Q1732,44.6 1733.4,44.6 L1750.8,44.6 Q1752.2,44.6 1752.2,43.2 L1752.2,34" fill="none" stroke="#333" stroke-width="2.9"/><path d="M1762.3,14.7 L1762.3,31 L1756.6,25.3 L1745.6,36.4 L1739.3,30.1 L1750.3,19.1 L1746,14.7 Z" fill="#333"/></g>
<g transform="translate(0,358)"><g fill="none" stroke="#333" stroke-linejoin="round"><path d="M1777.3,23.5 L1777.3,20 Q1777.3,19 1778.3,19 L1783.8,19 Q1784.8,19 1784.8,20 L1784.8,24 Q1784.8,25 1783.8,25 L1780.5,25" stroke-width="2.3"/><path d="M1780.5,22.5 Q1773,24.5 1774.5,30 Q1776.5,35 1787,35.3" stroke-width="4"/><path d="M1791,28.5 L1801.8,28.5 Q1802.5,28.5 1802.5,29.3 L1802.5,38.7 Q1802.5,39.5 1801.8,39.5 L1791,39.5" stroke-width="2.8"/></g><path d="M1785.3,27.5 L1795.5,35 L1785.3,41 Z" fill="#333"/></g>
<g transform="translate(0,358)"><path d="M1816.8,34.2 L1829.6,21.4 L1837,29.2 L1824.3,41.7 Z" fill="#333"/><path d="M1816.8,34.2 L1813,45.7 L1824.3,41.7 Z" fill="#333"/><path d="M1815.6,43.2 L1817.6,36.4 L1822.6,41 Z" fill="#fff"/><path d="M1831.6,19.4 L1839.2,26.6" stroke="#333" stroke-width="2"/><path d="M1836.6,15.6 L1843,22" stroke="#333" stroke-width="4.8" stroke-linecap="round"/></g>
<g transform="translate(0,358)"><path d="M1858.2,19 L1881.6,41 M1881.6,19 L1858.2,41" stroke="#2c2c2c" stroke-width="5.2" stroke-linecap="round"/></g>
<rect x="5" y="419" width="1887" height="60" fill="#fff" />
<rect x="6" y="419" width="10" height="60" fill="#e8edf6" />
<rect x="5" y="479" width="1887" height="1" fill="#c0c0c0" />
<g transform="translate(0,419)"><g fill="url(#gicon)"><path d="M27.45,6 L29.7,10.4 L33.9,11 L30.9,14.2 L31.6,18.9 L27.45,16.6 L23.3,18.9 L24,14.2 L21,11 L25.2,10.4 Z" stroke="#8a8a8a" stroke-width="0.8" stroke-linejoin="round"/><path d="M21,24.2 L27.1,24.6 L33.9,30.6 L29.2,35.6 L21,29.2 Z"/><path d="M27.5,41.2 Q28.6,41.2 28.6,42.3 Q31.9,43.6 32,48.5 L32.3,51.2 L33.9,53.8 L21,53.8 L22.6,51.2 L22.9,48.5 Q23,43.6 26.4,42.3 Q26.4,41.2 27.5,41.2 Z"/></g><rect x="39.7" y="5.6" width="14.6" height="14.8" fill="#fff" stroke="#5a5a5a" stroke-width="1.3"/></g>
<g transform="translate(0,419)"><path d="M91,49 L110,49 L104,40.6 L95,40.6 Z" fill="url(#flagsh)"/><path d="M96.6,11.4 L89,48.4" stroke="#7a7a7a" stroke-width="2.3"/><path d="M95.7,13.9 L86.4,32.8 L94.2,46.7 L105.6,34.5 Z" fill="url(#blueflag)"/></g>
<text transform="translate(131.40,454.5) scale(0.9465,1)" style="font-family:'Liberation Sans';font-size:15px;" fill="#1e1e1e" >OBJ20150011</text>
<text x="293.20" y="454.5" style="font-family:'Liberation Sans';font-size:15px;" fill="#1e1e1e" >-</text>
<text transform="translate(446.40,446.7) scale(0.9383,1)" style="font-family:'Liberation Sans';font-size:15px;" fill="#1e1e1e" >Janko Mrkvička</text>
<text transform="translate(728.49,454.5) scale(1.0100,1)" style="font-family:'Liberation Sans';font-size:15px;" fill="#1e1e1e" >1,07 €</text>
<text transform="translate(879.40,454.5) scale(1.0100,1)" style="font-family:'Liberation Sans';font-size:15px;" fill="#1e1e1e" >0,00 €</text>
<text transform="translate(1040.99,454.5) scale(1.0100,1)" style="font-family:'Liberation Sans';font-size:15px;" fill="#1e1e1e" >1,07 €</text>
<text transform="translate(1209.88,454.5) scale(0.9200,1)" style="font-family:'Liberation Sans';font-size:15px;" fill="#1e1e1e" >Pokladňa</text>
<text transform="translate(1323.83,454.6) scale(0.9659,1)" style="font-family:'Liberation Sans';font-size:15.5px;" fill="#1e1e1e" >15:25</text>
<text transform="translate(1366.50,454.6) scale(0.9613,1)" style="font-family:'Liberation Sans';font-size:13px;" fill="#858585" >02.Júl 2015</text>
<g transform="translate(0,419)"><ellipse cx="1533.2" cy="23" rx="10.3" ry="8.9" transform="rotate(-38 1533.2 23)" fill="none" stroke="#d42222" stroke-width="3.1"/><path d="M1527.5,19.8 L1541,26.5" stroke="#d42222" stroke-width="2.8"/><path d="M1524.5,28 Q1523,20 1530.5,14.5" fill="none" stroke="#f39a9a" stroke-width="1.4" opacity="0.9"/></g>
<g transform="translate(0,419)"><g stroke="#5c5c5c" stroke-width="4" stroke-linecap="round" opacity="0.92"><path d="M1514.6,38.5 L1522.2,46 M1522.2,38.5 L1514.6,46"/><path d="M1529.7,38.5 L1537.3,46 M1537.3,38.5 L1529.7,46"/><path d="M1544.8,38.5 L1552.4,46 M1552.4,38.5 L1544.8,46"/></g></g>
<g transform="translate(0,419)"><path d="M1568.5,30.1 L1576.8,37.4 L1593.5,21.4" fill="none" stroke="#1faa1f" stroke-width="4.8" stroke-linecap="round" stroke-linejoin="round"/></g>
<g transform="translate(0,419)"><g fill="none" stroke="#333" stroke-width="2.9" stroke-linecap="round" stroke-linejoin="round"><path d="M1619,23.4 L1612.5,26.8 L1619,30.2"/><path d="M1627.3,23.4 L1633.8,26.8 L1627.3,30.2"/></g><path d="M1624.6,21.6 L1622.1,32" stroke="#333" stroke-width="1.8"/></g>
<text transform="translate(1610.00,463.6) scale(0.9761,1)" style="font-family:'Liberation Sans';font-size:10px;font-weight:bold;" fill="#3a3a3a" stroke="#3a3a3a" stroke-width="0.45">HTML</text>
<g transform="translate(0,419)"><g fill="none" stroke="#333" stroke-linecap="round"><path d="M1662.7,17 L1662.7,24.5" stroke-width="2.8"/><path d="M1662.7,24 L1659,30.5 Q1656.5,34.5 1654,36.8" stroke-width="1.8"/><path d="M1655,36 L1653.8,37" stroke-width="2.6"/><path d="M1662.7,24 Q1665,29 1669,29.8 L1674.5,30.6" stroke-width="1.8"/><path d="M1671.5,30.2 L1675,30.8" stroke-width="2.8"/><path d="M1658.8,31.3 Q1664,29.8 1668.5,29.7" stroke-width="1.2"/></g></g>
<text transform="translate(1655.20,463.5) scale(0.8446,1)" style="font-family:'Liberation Sans';font-size:10px;font-weight:bold;" fill="#3a3a3a" stroke="#3a3a3a" stroke-width="0.45">PDF</text>
<g transform="translate(0,419)"><circle cx="1704.4" cy="30" r="12.6" fill="none" stroke="#333" stroke-width="3.5"/><circle cx="1703.5" cy="30.6" r="6.3" fill="none" stroke="#333" stroke-width="3.4"/><path d="M1710.6,23 L1710.6,33" stroke="#333" stroke-width="3"/><rect x="1704.4" y="30.4" width="16" height="12.6" fill="#fff"/><rect x="1705.3" y="31.2" width="14.6" height="11.2" rx="0.8" fill="#333"/><path d="M1706.2,32.4 L1712.6,37.6 L1719,32.4 M1706.2,41.6 L1710.4,37 M1719,41.6 L1714.8,37" fill="none" stroke="#d6d6d6" stroke-width="0.9"/></g>
<g transform="translate(0,419)"><path d="M1742.5,23.5 L1733.4,23.5 Q1732,23.5 1732,24.9 L1732,43.2 Q1732,44.6 1733.4,44.6 L1750.8,44.6 Q1752.2,44.6 1752.2,43.2 L1752.2,34" fill="none" stroke="#333" stroke-width="2.9"/><path d="M1762.3,14.7 L1762.3,31 L1756.6,25.3 L1745.6,36.4 L1739.3,30.1 L1750.3,19.1 L1746,14.7 Z" fill="#333"/></g>
<g transform="translate(0,419)"><g fill="none" stroke="#333" stroke-linejoin="round"><path d="M1777.3,23.5 L1777.3,20 Q1777.3,19 1778.3,19 L1783.8,19 Q1784.8,19 1784.8,20 L1784.8,24 Q1784.8,25 1783.8,25 L1780.5,25" stroke-width="2.3"/><path d="M1780.5,22.5 Q1773,24.5 1774.5,30 Q1776.5,35 1787,35.3" stroke-width="4"/><path d="M1791,28.5 L1801.8,28.5 Q1802.5,28.5 1802.5,29.3 L1802.5,38.7 Q1802.5,39.5 1801.8,39.5 L1791,39.5" stroke-width="2.8"/></g><path d="M1785.3,27.5 L1795.5,35 L1785.3,41 Z" fill="#333"/></g>
<g transform="translate(0,419)"><path d="M1816.8,34.2 L1829.6,21.4 L1837,29.2 L1824.3,41.7 Z" fill="#333"/><path d="M1816.8,34.2 L1813,45.7 L1824.3,41.7 Z" fill="#333"/><path d="M1815.6,43.2 L1817.6,36.4 L1822.6,41 Z" fill="#fff"/><path d="M1831.6,19.4 L1839.2,26.6" stroke="#333" stroke-width="2"/><path d="M1836.6,15.6 L1843,22" stroke="#333" stroke-width="4.8" stroke-linecap="round"/></g>
<g transform="translate(0,419)"><path d="M1858.2,19 L1881.6,41 M1881.6,19 L1858.2,41" stroke="#2c2c2c" stroke-width="5.2" stroke-linecap="round"/></g>
<rect x="5" y="480" width="1887" height="60" fill="#fff" />
<rect x="6" y="480" width="10" height="60" fill="#e8edf6" />
<rect x="5" y="540" width="1887" height="1" fill="#c0c0c0" />
<g transform="translate(0,480)"><g fill="url(#gicon)"><path d="M27.45,6 L29.7,10.4 L33.9,11 L30.9,14.2 L31.6,18.9 L27.45,16.6 L23.3,18.9 L24,14.2 L21,11 L25.2,10.4 Z" stroke="#8a8a8a" stroke-width="0.8" stroke-linejoin="round"/><path d="M21,24.2 L27.1,24.6 L33.9,30.6 L29.2,35.6 L21,29.2 Z"/><path d="M27.5,41.2 Q28.6,41.2 28.6,42.3 Q31.9,43.6 32,48.5 L32.3,51.2 L33.9,53.8 L21,53.8 L22.6,51.2 L22.9,48.5 Q23,43.6 26.4,42.3 Q26.4,41.2 27.5,41.2 Z"/></g><rect x="39.7" y="5.6" width="14.6" height="14.8" fill="#fff" stroke="#5a5a5a" stroke-width="1.3"/></g>
<g transform="translate(0,480)"><path d="M91,49 L110,49 L104,40.6 L95,40.6 Z" fill="url(#flagsh)"/><path d="M96.6,11.4 L89,48.4" stroke="#7a7a7a" stroke-width="2.3"/><path d="M95.7,13.9 L86.4,32.8 L94.2,46.7 L105.6,34.5 Z" fill="url(#blueflag)"/></g>
<text transform="translate(131.40,515.5) scale(0.9355,1)" style="font-family:'Liberation Sans';font-size:15px;" fill="#1e1e1e" >OBJ20150010</text>
<text x="293.20" y="515.5" style="font-family:'Liberation Sans';font-size:15px;" fill="#1e1e1e" >-</text>
<text transform="translate(446.40,507.7) scale(0.9383,1)" style="font-family:'Liberation Sans';font-size:15px;" fill="#1e1e1e" >Janko Mrkvička</text>
<text transform="translate(728.49,515.5) scale(1.0100,1)" style="font-family:'Liberation Sans';font-size:15px;" fill="#1e1e1e" >11,87 €</text>
<text transform="translate(879.40,515.5) scale(1.0100,1)" style="font-family:'Liberation Sans';font-size:15px;" fill="#1e1e1e" >0,00 €</text>
<text transform="translate(1040.99,515.5) scale(1.0100,1)" style="font-family:'Liberation Sans';font-size:15px;" fill="#1e1e1e" >11,87 €</text>
<text transform="translate(1209.88,515.5) scale(0.9200,1)" style="font-family:'Liberation Sans';font-size:15px;" fill="#1e1e1e" >Pokladňa</text>
<text transform="translate(1323.86,515.6) scale(0.9406,1)" style="font-family:'Liberation Sans';font-size:15.5px;" fill="#1e1e1e" >15:24</text>
<text transform="translate(1366.50,515.6) scale(0.9613,1)" style="font-family:'Liberation Sans';font-size:13px;" fill="#858585" >02.Júl 2015</text>
<g transform="translate(0,480)"><ellipse cx="1533.2" cy="23" rx="10.3" ry="8.9" transform="rotate(-38 1533.2 23)" fill="none" stroke="#d42222" stroke-width="3.1"/><path d="M1527.5,19.8 L1541,26.5" stroke="#d42222" stroke-width="2.8"/><path d="M1524.5,28 Q1523,20 1530.5,14.5" fill="none" stroke="#f39a9a" stroke-width="1.4" opacity="0.9"/></g>
<g transform="translate(0,480)"><g stroke="#5c5c5c" stroke-width="4" stroke-linecap="round" opacity="0.92"><path d="M1514.6,38.5 L1522.2,46 M1522.2,38.5 L1514.6,46"/><path d="M1529.7,38.5 L1537.3,46 M1537.3,38.5 L1529.7,46"/><path d="M1544.8,38.5 L1552.4,46 M1552.4,38.5 L1544.8,46"/></g></g>
<g transform="translate(0,480)"><path d="M1568.5,30.1 L1576.8,37.4 L1593.5,21.4" fill="none" stroke="#1faa1f" stroke-width="4.8" stroke-linecap="round" stroke-linejoin="round"/></g>
<g transform="translate(0,480)"><g fill="none" stroke="#333" stroke-width="2.9" stroke-linecap="round" stroke-linejoin="round"><path d="M1619,23.4 L1612.5,26.8 L1619,30.2"/><path d="M1627.3,23.4 L1633.8,26.8 L1627.3,30.2"/></g><path d="M1624.6,21.6 L1622.1,32" stroke="#333" stroke-width="1.8"/></g>
<text transform="translate(1610.00,524.6) scale(0.9761,1)" style="font-family:'Liberation Sans';font-size:10px;font-weight:bold;" fill="#3a3a3a" stroke="#3a3a3a" stroke-width="0.45">HTML</text>
<g transform="translate(0,480)"><g fill="none" stroke="#333" stroke-linecap="round"><path d="M1662.7,17 L1662.7,24.5" stroke-width="2.8"/><path d="M1662.7,24 L1659,30.5 Q1656.5,34.5 1654,36.8" stroke-width="1.8"/><path d="M1655,36 L1653.8,37" stroke-width="2.6"/><path d="M1662.7,24 Q1665,29 1669,29.8 L1674.5,30.6" stroke-width="1.8"/><path d="M1671.5,30.2 L1675,30.8" stroke-width="2.8"/><path d="M1658.8,31.3 Q1664,29.8 1668.5,29.7" stroke-width="1.2"/></g></g>
<text transform="translate(1655.20,524.5) scale(0.8446,1)" style="font-family:'Liberation Sans';font-size:10px;font-weight:bold;" fill="#3a3a3a" stroke="#3a3a3a" stroke-width="0.45">PDF</text>
<g transform="translate(0,480)"><circle cx="1704.4" cy="30" r="12.6" fill="none" stroke="#333" stroke-width="3.5"/><circle cx="1703.5" cy="30.6" r="6.3" fill="none" stroke="#333" stroke-width="3.4"/><path d="M1710.6,23 L1710.6,33" stroke="#333" stroke-width="3"/><rect x="1704.4" y="30.4" width="16" height="12.6" fill="#fff"/><rect x="1705.3" y="31.2" width="14.6" height="11.2" rx="0.8" fill="#333"/><path d="M1706.2,32.4 L1712.6,37.6 L1719,32.4 M1706.2,41.6 L1710.4,37 M1719,41.6 L1714.8,37" fill="none" stroke="#d6d6d6" stroke-width="0.9"/></g>
<g transform="translate(0,480)"><path d="M1742.5,23.5 L1733.4,23.5 Q1732,23.5 1732,24.9 L1732,43.2 Q1732,44.6 1733.4,44.6 L1750.8,44.6 Q1752.2,44.6 1752.2,43.2 L1752.2,34" fill="none" stroke="#333" stroke-width="2.9"/><path d="M1762.3,14.7 L1762.3,31 L1756.6,25.3 L1745.6,36.4 L1739.3,30.1 L1750.3,19.1 L1746,14.7 Z" fill="#333"/></g>
<g transform="translate(0,480)"><g fill="none" stroke="#333" stroke-linejoin="round"><path d="M1777.3,23.5 L1777.3,20 Q1777.3,19 1778.3,19 L1783.8,19 Q1784.8,19 1784.8,20 L1784.8,24 Q1784.8,25 1783.8,25 L1780.5,25" stroke-width="2.3"/><path d="M1780.5,22.5 Q1773,24.5 1774.5,30 Q1776.5,35 1787,35.3" stroke-width="4"/><path d="M1791,28.5 L1801.8,28.5 Q1802.5,28.5 1802.5,29.3 L1802.5,38.7 Q1802.5,39.5 1801.8,39.5 L1791,39.5" stroke-width="2.8"/></g><path d="M1785.3,27.5 L1795.5,35 L1785.3,41 Z" fill="#333"/></g>
<g transform="translate(0,480)"><path d="M1816.8,34.2 L1829.6,21.4 L1837,29.2 L1824.3,41.7 Z" fill="#333"/><path d="M1816.8,34.2 L1813,45.7 L1824.3,41.7 Z" fill="#333"/><path d="M1815.6,43.2 L1817.6,36.4 L1822.6,41 Z" fill="#fff"/><path d="M1831.6,19.4 L1839.2,26.6" stroke="#333" stroke-width="2"/><path d="M1836.6,15.6 L1843,22" stroke="#333" stroke-width="4.8" stroke-linecap="round"/></g>
<g transform="translate(0,480)"><path d="M1858.2,19 L1881.6,41 M1881.6,19 L1858.2,41" stroke="#2c2c2c" stroke-width="5.2" stroke-linecap="round"/></g>
<rect x="5" y="541" width="1887" height="60" fill="#fff" />
<rect x="6" y="541" width="10" height="60" fill="#cc00ee" />
<rect x="5" y="601" width="1887" height="1" fill="#c0c0c0" />
<g transform="translate(0,541)"><g fill="url(#gicon)"><path d="M27.45,6 L29.7,10.4 L33.9,11 L30.9,14.2 L31.6,18.9 L27.45,16.6 L23.3,18.9 L24,14.2 L21,11 L25.2,10.4 Z" stroke="#8a8a8a" stroke-width="0.8" stroke-linejoin="round"/><path d="M21,24.2 L27.1,24.6 L33.9,30.6 L29.2,35.6 L21,29.2 Z"/><path d="M27.5,41.2 Q28.6,41.2 28.6,42.3 Q31.9,43.6 32,48.5 L32.3,51.2 L33.9,53.8 L21,53.8 L22.6,51.2 L22.9,48.5 Q23,43.6 26.4,42.3 Q26.4,41.2 27.5,41.2 Z"/></g><rect x="39.7" y="5.6" width="14.6" height="14.8" fill="#fff" stroke="#5a5a5a" stroke-width="1.3"/></g>
<g transform="translate(0,541)"><path d="M91,49 L110,49 L104,40.6 L95,40.6 Z" fill="url(#flagsh)"/><path d="M96.6,11.4 L89,48.4" stroke="#7a7a7a" stroke-width="2.3"/><path d="M95.7,13.9 L86.4,32.8 L94.2,46.7 L105.6,34.5 Z" fill="url(#blueflag)"/></g>
<text transform="translate(131.40,576.5) scale(0.9355,1)" style="font-family:'Liberation Sans';font-size:15px;" fill="#1e1e1e" >OBJ20150009</text>
<text x="293.20" y="576.5" style="font-family:'Liberation Sans';font-size:15px;" fill="#1e1e1e" >-</text>
<text transform="translate(446.40,568.7) scale(0.9383,1)" style="font-family:'Liberation Sans';font-size:15px;" fill="#1e1e1e" >Janko Mrkvička</text>
<text transform="translate(728.49,576.5) scale(1.0100,1)" style="font-family:'Liberation Sans';font-size:15px;" fill="#1e1e1e" >15,47 €</text>
<text transform="translate(879.40,576.5) scale(1.0100,1)" style="font-family:'Liberation Sans';font-size:15px;" fill="#1e1e1e" >0,00 €</text>
<text transform="translate(1040.99,576.5) scale(1.0100,1)" style="font-family:'Liberation Sans';font-size:15px;" fill="#1e1e1e" >15,47 €</text>
<text transform="translate(1209.88,576.5) scale(0.9200,1)" style="font-family:'Liberation Sans';font-size:15px;" fill="#1e1e1e" >Pokladňa</text>
<text transform="translate(1323.86,576.6) scale(0.9406,1)" style="font-family:'Liberation Sans';font-size:15.5px;" fill="#1e1e1e" >15:24</text>
<text transform="translate(1366.50,576.6) scale(0.9613,1)" style="font-family:'Liberation Sans';font-size:13px;" fill="#858585" >02.Júl 2015</text>
<g transform="translate(0,541)"><ellipse cx="1531" cy="30.5" rx="9.6" ry="3.2" fill="#c98200"/><rect x="1521.4" y="15" width="19.2" height="15.5" fill="url(#coin)"/><ellipse cx="1531" cy="14.8" rx="9.6" ry="3.6" fill="#ffdf55" stroke="#e3a400" stroke-width="0.8"/><path d="M1521.4,19.5 Q1531,22.5 1540.6,19.5 M1521.4,23.5 Q1531,26.5 1540.6,23.5 M1521.4,27.5 Q1531,30.5 1540.6,27.5" stroke="#d08a00" stroke-width="0.9" fill="none"/><ellipse cx="1540.5" cy="26" rx="3.8" ry="6.4" transform="rotate(-28 1540.5 26)" fill="#e2e2e2" stroke="#a0a0a0" stroke-width="1"/></g>
<g transform="translate(0,541)"><g stroke="#5c5c5c" stroke-width="4" stroke-linecap="round" opacity="0.92"><path d="M1514.6,38.5 L1522.2,46 M1522.2,38.5 L1514.6,46"/><path d="M1529.7,38.5 L1537.3,46 M1537.3,38.5 L1529.7,46"/><path d="M1544.8,38.5 L1552.4,46 M1552.4,38.5 L1544.8,46"/></g></g>
<g transform="translate(0,541)"><g fill="none" stroke="#cc00ff"><path d="M1581,39.5 L1570,39.5 Q1568.3,39.5 1568.3,37.8 L1568.3,17.3 Q1568.3,15.6 1570,15.6 L1586,15.6 Q1587.7,15.6 1587.7,17.3 L1587.7,31" stroke-width="2.6"/><path d="M1572.2,22 L1584,22 M1572.2,26 L1584,26 M1572.2,30 L1581,30 M1572.2,34 L1577.5,34" stroke-width="1.9"/><path d="M1583.2,34.2 L1591.6,42.8 M1591.6,34.2 L1583.2,42.8" stroke-width="4" stroke-linecap="round"/></g></g>
<g transform="translate(0,541)"><g fill="none" stroke="#333" stroke-width="2.9" stroke-linecap="round" stroke-linejoin="round"><path d="M1619,23.4 L1612.5,26.8 L1619,30.2"/><path d="M1627.3,23.4 L1633.8,26.8 L1627.3,30.2"/></g><path d="M1624.6,21.6 L1622.1,32" stroke="#333" stroke-width="1.8"/></g>
<text transform="translate(1610.00,585.6) scale(0.9761,1)" style="font-family:'Liberation Sans';font-size:10px;font-weight:bold;" fill="#3a3a3a" stroke="#3a3a3a" stroke-width="0.45">HTML</text>
<g transform="translate(0,541)"><g fill="none" stroke="#333" stroke-linecap="round"><path d="M1662.7,17 L1662.7,24.5" stroke-width="2.8"/><path d="M1662.7,24 L1659,30.5 Q1656.5,34.5 1654,36.8" stroke-width="1.8"/><path d="M1655,36 L1653.8,37" stroke-width="2.6"/><path d="M1662.7,24 Q1665,29 1669,29.8 L1674.5,30.6" stroke-width="1.8"/><path d="M1671.5,30.2 L1675,30.8" stroke-width="2.8"/><path d="M1658.8,31.3 Q1664,29.8 1668.5,29.7" stroke-width="1.2"/></g></g>
<text transform="translate(1655.20,585.5) scale(0.8446,1)" style="font-family:'Liberation Sans';font-size:10px;font-weight:bold;" fill="#3a3a3a" stroke="#3a3a3a" stroke-width="0.45">PDF</text>
<g transform="translate(0,541)"><circle cx="1704.4" cy="30" r="12.6" fill="none" stroke="#333" stroke-width="3.5"/><circle cx="1703.5" cy="30.6" r="6.3" fill="none" stroke="#333" stroke-width="3.4"/><path d="M1710.6,23 L1710.6,33" stroke="#333" stroke-width="3"/><rect x="1704.4" y="30.4" width="16" height="12.6" fill="#fff"/><rect x="1705.3" y="31.2" width="14.6" height="11.2" rx="0.8" fill="#333"/><path d="M1706.2,32.4 L1712.6,37.6 L1719,32.4 M1706.2,41.6 L1710.4,37 M1719,41.6 L1714.8,37" fill="none" stroke="#d6d6d6" stroke-width="0.9"/></g>
<g transform="translate(0,541)"><path d="M1742.5,23.5 L1733.4,23.5 Q1732,23.5 1732,24.9 L1732,43.2 Q1732,44.6 1733.4,44.6 L1750.8,44.6 Q1752.2,44.6 1752.2,43.2 L1752.2,34" fill="none" stroke="#333" stroke-width="2.9"/><path d="M1762.3,14.7 L1762.3,31 L1756.6,25.3 L1745.6,36.4 L1739.3,30.1 L1750.3,19.1 L1746,14.7 Z" fill="#333"/></g>
<g transform="translate(0,541)"><g fill="none" stroke="#333" stroke-linejoin="round"><path d="M1777.3,23.5 L1777.3,20 Q1777.3,19 1778.3,19 L1783.8,19 Q1784.8,19 1784.8,20 L1784.8,24 Q1784.8,25 1783.8,25 L1780.5,25" stroke-width="2.3"/><path d="M1780.5,22.5 Q1773,24.5 1774.5,30 Q1776.5,35 1787,35.3" stroke-width="4"/><path d="M1791,28.5 L1801.8,28.5 Q1802.5,28.5 1802.5,29.3 L1802.5,38.7 Q1802.5,39.5 1801.8,39.5 L1791,39.5" stroke-width="2.8"/></g><path d="M1785.3,27.5 L1795.5,35 L1785.3,41 Z" fill="#333"/></g>
<g transform="translate(0,541)"><path d="M1816.8,34.2 L1829.6,21.4 L1837,29.2 L1824.3,41.7 Z" fill="#333"/><path d="M1816.8,34.2 L1813,45.7 L1824.3,41.7 Z" fill="#333"/><path d="M1815.6,43.2 L1817.6,36.4 L1822.6,41 Z" fill="#fff"/><path d="M1831.6,19.4 L1839.2,26.6" stroke="#333" stroke-width="2"/><path d="M1836.6,15.6 L1843,22" stroke="#333" stroke-width="4.8" stroke-linecap="round"/></g>
<g transform="translate(0,541)"><path d="M1858.2,19 L1881.6,41 M1881.6,19 L1858.2,41" stroke="#2c2c2c" stroke-width="5.2" stroke-linecap="round"/></g>
<rect x="5" y="602" width="1887" height="60" fill="#fff" />
<rect x="6" y="602" width="10" height="60" fill="#e8edf6" />
<rect x="5" y="662" width="1887" height="1" fill="#c0c0c0" />
<g transform="translate(0,602)"><g fill="url(#gicon)"><path d="M27.45,6 L29.7,10.4 L33.9,11 L30.9,14.2 L31.6,18.9 L27.45,16.6 L23.3,18.9 L24,14.2 L21,11 L25.2,10.4 Z" stroke="#8a8a8a" stroke-width="0.8" stroke-linejoin="round"/><path d="M21,24.2 L27.1,24.6 L33.9,30.6 L29.2,35.6 L21,29.2 Z"/><path d="M27.5,41.2 Q28.6,41.2 28.6,42.3 Q31.9,43.6 32,48.5 L32.3,51.2 L33.9,53.8 L21,53.8 L22.6,51.2 L22.9,48.5 Q23,43.6 26.4,42.3 Q26.4,41.2 27.5,41.2 Z"/></g><rect x="39.7" y="5.6" width="14.6" height="14.8" fill="#fff" stroke="#5a5a5a" stroke-width="1.3"/></g>
<g transform="translate(0,602)"><path d="M91,49 L110,49 L104,40.6 L95,40.6 Z" fill="url(#flagsh)"/><path d="M96.6,11.4 L89,48.4" stroke="#7a7a7a" stroke-width="2.3"/><path d="M95.7,13.9 L86.4,32.8 L94.2,46.7 L105.6,34.5 Z" fill="url(#greenflag)"/></g>
<text transform="translate(131.40,637.5) scale(0.9355,1)" style="font-family:'Liberation Sans';font-size:15px;" fill="#1e1e1e" >OBJ20150008</text>
<text x="293.20" y="637.5" style="font-family:'Liberation Sans';font-size:15px;" fill="#1e1e1e" >-</text>
<text transform="translate(446.40,629.7) scale(0.9383,1)" style="font-family:'Liberation Sans';font-size:15px;" fill="#1e1e1e" >Janko Mrkvička</text>
<text transform="translate(729.50,637.5) scale(1.0100,1)" style="font-family:'Liberation Sans';font-size:15px;" fill="#1e1e1e" >33,60 €</text>
<text transform="translate(879.40,637.5) scale(1.0100,1)" style="font-family:'Liberation Sans';font-size:15px;" fill="#1e1e1e" >0,00 €</text>
<text transform="translate(1042.00,637.5) scale(1.0100,1)" style="font-family:'Liberation Sans';font-size:15px;" fill="#1e1e1e" >33,60 €</text>
<text transform="translate(1210.80,637.5) scale(0.9200,1)" style="font-family:'Liberation Sans';font-size:15px;" fill="#1e1e1e" >Čašník</text>
<text transform="translate(1323.86,637.6) scale(0.9406,1)" style="font-family:'Liberation Sans';font-size:15.5px;" fill="#1e1e1e" >15:24</text>
<text transform="translate(1366.50,637.6) scale(0.9613,1)" style="font-family:'Liberation Sans';font-size:13px;" fill="#858585" >02.Júl 2015</text>
<g transform="translate(0,602)"><ellipse cx="1533.2" cy="23" rx="10.3" ry="8.9" transform="rotate(-38 1533.2 23)" fill="none" stroke="#d42222" stroke-width="3.1"/><path d="M1527.5,19.8 L1541,26.5" stroke="#d42222" stroke-width="2.8"/><path d="M1524.5,28 Q1523,20 1530.5,14.5" fill="none" stroke="#f39a9a" stroke-width="1.4" opacity="0.9"/></g>
<g transform="translate(0,602)"><g stroke="#5c5c5c" stroke-width="4" stroke-linecap="round" opacity="0.92"><path d="M1514.6,38.5 L1522.2,46 M1522.2,38.5 L1514.6,46"/><path d="M1529.7,38.5 L1537.3,46 M1537.3,38.5 L1529.7,46"/><path d="M1544.8,38.5 L1552.4,46 M1552.4,38.5 L1544.8,46"/></g></g>
<g transform="translate(0,602)"><path d="M1568.5,30.1 L1576.8,37.4 L1593.5,21.4" fill="none" stroke="#1faa1f" stroke-width="4.8" stroke-linecap="round" stroke-linejoin="round"/></g>
<g transform="translate(0,602)"><g fill="none" stroke="#333" stroke-width="2.9" stroke-linecap="round" stroke-linejoin="round"><path d="M1619,23.4 L1612.5,26.8 L1619,30.2"/><path d="M1627.3,23.4 L1633.8,26.8 L1627.3,30.2"/></g><path d="M1624.6,21.6 L1622.1,32" stroke="#333" stroke-width="1.8"/></g>
<text transform="translate(1610.00,646.6) scale(0.9761,1)" style="font-family:'Liberation Sans';font-size:10px;font-weight:bold;" fill="#3a3a3a" stroke="#3a3a3a" stroke-width="0.45">HTML</text>
<g transform="translate(0,602)"><g fill="none" stroke="#333" stroke-linecap="round"><path d="M1662.7,17 L1662.7,24.5" stroke-width="2.8"/><path d="M1662.7,24 L1659,30.5 Q1656.5,34.5 1654,36.8" stroke-width="1.8"/><path d="M1655,36 L1653.8,37" stroke-width="2.6"/><path d="M1662.7,24 Q1665,29 1669,29.8 L1674.5,30.6" stroke-width="1.8"/><path d="M1671.5,30.2 L1675,30.8" stroke-width="2.8"/><path d="M1658.8,31.3 Q1664,29.8 1668.5,29.7" stroke-width="1.2"/></g></g>
<text transform="translate(1655.20,646.5) scale(0.8446,1)" style="font-family:'Liberation Sans';font-size:10px;font-weight:bold;" fill="#3a3a3a" stroke="#3a3a3a" stroke-width="0.45">PDF</text>
<g transform="translate(0,602)"><circle cx="1704.4" cy="30" r="12.6" fill="none" stroke="#333" stroke-width="3.5"/><circle cx="1703.5" cy="30.6" r="6.3" fill="none" stroke="#333" stroke-width="3.4"/><path d="M1710.6,23 L1710.6,33" stroke="#333" stroke-width="3"/><rect x="1704.4" y="30.4" width="16" height="12.6" fill="#fff"/><rect x="1705.3" y="31.2" width="14.6" height="11.2" rx="0.8" fill="#333"/><path d="M1706.2,32.4 L1712.6,37.6 L1719,32.4 M1706.2,41.6 L1710.4,37 M1719,41.6 L1714.8,37" fill="none" stroke="#d6d6d6" stroke-width="0.9"/></g>
<g transform="translate(0,602)"><path d="M1742.5,23.5 L1733.4,23.5 Q1732,23.5 1732,24.9 L1732,43.2 Q1732,44.6 1733.4,44.6 L1750.8,44.6 Q1752.2,44.6 1752.2,43.2 L1752.2,34" fill="none" stroke="#333" stroke-width="2.9"/><path d="M1762.3,14.7 L1762.3,31 L1756.6,25.3 L1745.6,36.4 L1739.3,30.1 L1750.3,19.1 L1746,14.7 Z" fill="#333"/></g>
<g transform="translate(0,602)"><g fill="none" stroke="#333" stroke-linejoin="round"><path d="M1777.3,23.5 L1777.3,20 Q1777.3,19 1778.3,19 L1783.8,19 Q1784.8,19 1784.8,20 L1784.8,24 Q1784.8,25 1783.8,25 L1780.5,25" stroke-width="2.3"/><path d="M1780.5,22.5 Q1773,24.5 1774.5,30 Q1776.5,35 1787,35.3" stroke-width="4"/><path d="M1791,28.5 L1801.8,28.5 Q1802.5,28.5 1802.5,29.3 L1802.5,38.7 Q1802.5,39.5 1801.8,39.5 L1791,39.5" stroke-width="2.8"/></g><path d="M1785.3,27.5 L1795.5,35 L1785.3,41 Z" fill="#333"/></g>
<g transform="translate(0,602)"><path d="M1816.8,34.2 L1829.6,21.4 L1837,29.2 L1824.3,41.7 Z" fill="#333"/><path d="M1816.8,34.2 L1813,45.7 L1824.3,41.7 Z" fill="#333"/><path d="M1815.6,43.2 L1817.6,36.4 L1822.6,41 Z" fill="#fff"/><path d="M1831.6,19.4 L1839.2,26.6" stroke="#333" stroke-width="2"/><path d="M1836.6,15.6 L1843,22" stroke="#333" stroke-width="4.8" stroke-linecap="round"/></g>
<g transform="translate(0,602)"><path d="M1858.2,19 L1881.6,41 M1881.6,19 L1858.2,41" stroke="#2c2c2c" stroke-width="5.2" stroke-linecap="round"/></g>
<rect x="5" y="663" width="1887" height="60" fill="#fff" />
<rect x="6" y="663" width="10" height="60" fill="#e8edf6" />
<rect x="5" y="723" width="1887" height="1" fill="#c0c0c0" />
<g transform="translate(0,663)"><g fill="url(#gicon)"><path d="M27.45,6 L29.7,10.4 L33.9,11 L30.9,14.2 L31.6,18.9 L27.45,16.6 L23.3,18.9 L24,14.2 L21,11 L25.2,10.4 Z" stroke="#8a8a8a" stroke-width="0.8" stroke-linejoin="round"/><path d="M21,24.2 L27.1,24.6 L33.9,30.6 L29.2,35.6 L21,29.2 Z"/><path d="M27.5,41.2 Q28.6,41.2 28.6,42.3 Q31.9,43.6 32,48.5 L32.3,51.2 L33.9,53.8 L21,53.8 L22.6,51.2 L22.9,48.5 Q23,43.6 26.4,42.3 Q26.4,41.2 27.5,41.2 Z"/></g><rect x="39.7" y="5.6" width="14.6" height="14.8" fill="#fff" stroke="#5a5a5a" stroke-width="1.3"/></g>
<g transform="translate(0,663)"><path d="M91,49 L110,49 L104,40.6 L95,40.6 Z" fill="url(#flagsh)"/><path d="M96.6,11.4 L89,48.4" stroke="#7a7a7a" stroke-width="2.3"/><path d="M95.7,13.9 L86.4,32.8 L94.2,46.7 L105.6,34.5 Z" fill="url(#greenflag)"/></g>
<text transform="translate(131.40,698.5) scale(0.9355,1)" style="font-family:'Liberation Sans';font-size:15px;" fill="#1e1e1e" >OBJ20150007</text>
<text x="293.20" y="698.5" style="font-family:'Liberation Sans';font-size:15px;" fill="#1e1e1e" >-</text>
<text transform="translate(446.40,690.7) scale(0.9383,1)" style="font-family:'Liberation Sans';font-size:15px;" fill="#1e1e1e" >Janko Mrkvička</text>
<text transform="translate(728.49,698.5) scale(1.0100,1)" style="font-family:'Liberation Sans';font-size:15px;" fill="#1e1e1e" >11,87 €</text>
<text transform="translate(879.40,698.5) scale(1.0100,1)" style="font-family:'Liberation Sans';font-size:15px;" fill="#1e1e1e" >0,00 €</text>
<text transform="translate(1040.99,698.5) scale(1.0100,1)" style="font-family:'Liberation Sans';font-size:15px;" fill="#1e1e1e" >11,87 €</text>
<text transform="translate(1210.80,698.5) scale(0.9200,1)" style="font-family:'Liberation Sans';font-size:15px;" fill="#1e1e1e" >Čašník</text>
<text transform="translate(1323.83,698.6) scale(0.9659,1)" style="font-family:'Liberation Sans';font-size:15.5px;" fill="#1e1e1e" >15:23</text>
<text transform="translate(1366.50,698.6) scale(0.9613,1)" style="font-family:'Liberation Sans';font-size:13px;" fill="#858585" >02.Júl 2015</text>
<g transform="translate(0,663)"><ellipse cx="1533.2" cy="23" rx="10.3" ry="8.9" transform="rotate(-38 1533.2 23)" fill="none" stroke="#d42222" stroke-width="3.1"/><path d="M1527.5,19.8 L1541,26.5" stroke="#d42222" stroke-width="2.8"/><path d="M1524.5,28 Q1523,20 1530.5,14.5" fill="none" stroke="#f39a9a" stroke-width="1.4" opacity="0.9"/></g>
<g transform="translate(0,663)"><g stroke="#5c5c5c" stroke-width="4" stroke-linecap="round" opacity="0.92"><path d="M1514.6,38.5 L1522.2,46 M1522.2,38.5 L1514.6,46"/><path d="M1529.7,38.5 L1537.3,46 M1537.3,38.5 L1529.7,46"/><path d="M1544.8,38.5 L1552.4,46 M1552.4,38.5 L1544.8,46"/></g></g>
<g transform="translate(0,663)"><path d="M1568.5,30.1 L1576.8,37.4 L1593.5,21.4" fill="none" stroke="#1faa1f" stroke-width="4.8" stroke-linecap="round" stroke-linejoin="round"/></g>
<g transform="translate(0,663)"><g fill="none" stroke="#333" stroke-width="2.9" stroke-linecap="round" stroke-linejoin="round"><path d="M1619,23.4 L1612.5,26.8 L1619,30.2"/><path d="M1627.3,23.4 L1633.8,26.8 L1627.3,30.2"/></g><path d="M1624.6,21.6 L1622.1,32" stroke="#333" stroke-width="1.8"/></g>
<text transform="translate(1610.00,707.6) scale(0.9761,1)" style="font-family:'Liberation Sans';font-size:10px;font-weight:bold;" fill="#3a3a3a" stroke="#3a3a3a" stroke-width="0.45">HTML</text>
<g transform="translate(0,663)"><g fill="none" stroke="#333" stroke-linecap="round"><path d="M1662.7,17 L1662.7,24.5" stroke-width="2.8"/><path d="M1662.7,24 L1659,30.5 Q1656.5,34.5 1654,36.8" stroke-width="1.8"/><path d="M1655,36 L1653.8,37" stroke-width="2.6"/><path d="M1662.7,24 Q1665,29 1669,29.8 L1674.5,30.6" stroke-width="1.8"/><path d="M1671.5,30.2 L1675,30.8" stroke-width="2.8"/><path d="M1658.8,31.3 Q1664,29.8 1668.5,29.7" stroke-width="1.2"/></g></g>
<text transform="translate(1655.20,707.5) scale(0.8446,1)" style="font-family:'Liberation Sans';font-size:10px;font-weight:bold;" fill="#3a3a3a" stroke="#3a3a3a" stroke-width="0.45">PDF</text>
<g transform="translate(0,663)"><circle cx="1704.4" cy="30" r="12.6" fill="none" stroke="#333" stroke-width="3.5"/><circle cx="1703.5" cy="30.6" r="6.3" fill="none" stroke="#333" stroke-width="3.4"/><path d="M1710.6,23 L1710.6,33" stroke="#333" stroke-width="3"/><rect x="1704.4" y="30.4" width="16" height="12.6" fill="#fff"/><rect x="1705.3" y="31.2" width="14.6" height="11.2" rx="0.8" fill="#333"/><path d="M1706.2,32.4 L1712.6,37.6 L1719,32.4 M1706.2,41.6 L1710.4,37 M1719,41.6 L1714.8,37" fill="none" stroke="#d6d6d6" stroke-width="0.9"/></g>
<g transform="translate(0,663)"><path d="M1742.5,23.5 L1733.4,23.5 Q1732,23.5 1732,24.9 L1732,43.2 Q1732,44.6 1733.4,44.6 L1750.8,44.6 Q1752.2,44.6 1752.2,43.2 L1752.2,34" fill="none" stroke="#333" stroke-width="2.9"/><path d="M1762.3,14.7 L1762.3,31 L1756.6,25.3 L1745.6,36.4 L1739.3,30.1 L1750.3,19.1 L1746,14.7 Z" fill="#333"/></g>
<g transform="translate(0,663)"><g fill="none" stroke="#333" stroke-linejoin="round"><path d="M1777.3,23.5 L1777.3,20 Q1777.3,19 1778.3,19 L1783.8,19 Q1784.8,19 1784.8,20 L1784.8,24 Q1784.8,25 1783.8,25 L1780.5,25" stroke-width="2.3"/><path d="M1780.5,22.5 Q1773,24.5 1774.5,30 Q1776.5,35 1787,35.3" stroke-width="4"/><path d="M1791,28.5 L1801.8,28.5 Q1802.5,28.5 1802.5,29.3 L1802.5,38.7 Q1802.5,39.5 1801.8,39.5 L1791,39.5" stroke-width="2.8"/></g><path d="M1785.3,27.5 L1795.5,35 L1785.3,41 Z" fill="#333"/></g>
<g transform="translate(0,663)"><path d="M1816.8,34.2 L1829.6,21.4 L1837,29.2 L1824.3,41.7 Z" fill="#333"/><path d="M1816.8,34.2 L1813,45.7 L1824.3,41.7 Z" fill="#333"/><path d="M1815.6,43.2 L1817.6,36.4 L1822.6,41 Z" fill="#fff"/><path d="M1831.6,19.4 L1839.2,26.6" stroke="#333" stroke-width="2"/><path d="M1836.6,15.6 L1843,22" stroke="#333" stroke-width="4.8" stroke-linecap="round"/></g>
<g transform="translate(0,663)"><path d="M1858.2,19 L1881.6,41 M1881.6,19 L1858.2,41" stroke="#2c2c2c" stroke-width="5.2" stroke-linecap="round"/></g>
<rect x="5" y="724" width="1887" height="60" fill="#fff" />
<rect x="6" y="724" width="10" height="60" fill="#e8edf6" />
<rect x="5" y="784" width="1887" height="1" fill="#c0c0c0" />
<g transform="translate(0,724)"><g fill="url(#gicon)"><path d="M27.45,6 L29.7,10.4 L33.9,11 L30.9,14.2 L31.6,18.9 L27.45,16.6 L23.3,18.9 L24,14.2 L21,11 L25.2,10.4 Z" stroke="#8a8a8a" stroke-width="0.8" stroke-linejoin="round"/><path d="M21,24.2 L27.1,24.6 L33.9,30.6 L29.2,35.6 L21,29.2 Z"/><path d="M27.5,41.2 Q28.6,41.2 28.6,42.3 Q31.9,43.6 32,48.5 L32.3,51.2 L33.9,53.8 L21,53.8 L22.6,51.2 L22.9,48.5 Q23,43.6 26.4,42.3 Q26.4,41.2 27.5,41.2 Z"/></g><rect x="39.7" y="5.6" width="14.6" height="14.8" fill="#fff" stroke="#5a5a5a" stroke-width="1.3"/></g>
<g transform="translate(0,724)"><path d="M91,49 L110,49 L104,40.6 L95,40.6 Z" fill="url(#flagsh)"/><path d="M96.6,11.4 L89,48.4" stroke="#7a7a7a" stroke-width="2.3"/><path d="M95.7,13.9 L86.4,32.8 L94.2,46.7 L105.6,34.5 Z" fill="url(#greenflag)"/></g>
<text transform="translate(131.40,759.5) scale(0.9355,1)" style="font-family:'Liberation Sans';font-size:15px;" fill="#1e1e1e" >OBJ20150006</text>
<text x="293.20" y="759.5" style="font-family:'Liberation Sans';font-size:15px;" fill="#1e1e1e" >-</text>
<text transform="translate(446.40,751.7) scale(0.9383,1)" style="font-family:'Liberation Sans';font-size:15px;" fill="#1e1e1e" >Janko Mrkvička</text>
<text transform="translate(729.50,759.5) scale(1.0100,1)" style="font-family:'Liberation Sans';font-size:15px;" fill="#1e1e1e" >3,23 €</text>
<text transform="translate(879.40,759.5) scale(1.0100,1)" style="font-family:'Liberation Sans';font-size:15px;" fill="#1e1e1e" >0,00 €</text>
<text transform="translate(1042.00,759.5) scale(1.0100,1)" style="font-family:'Liberation Sans';font-size:15px;" fill="#1e1e1e" >3,23 €</text>
<text transform="translate(1210.80,759.5) scale(0.9200,1)" style="font-family:'Liberation Sans';font-size:15px;" fill="#1e1e1e" >Čašník</text>
<text transform="translate(1323.83,759.6) scale(0.9659,1)" style="font-family:'Liberation Sans';font-size:15.5px;" fill="#1e1e1e" >15:21</text>
<text transform="translate(1366.50,759.6) scale(0.9613,1)" style="font-family:'Liberation Sans';font-size:13px;" fill="#858585" >02.Júl 2015</text>
<g transform="translate(0,724)"><ellipse cx="1533.2" cy="23" rx="10.3" ry="8.9" transform="rotate(-38 1533.2 23)" fill="none" stroke="#d42222" stroke-width="3.1"/><path d="M1527.5,19.8 L1541,26.5" stroke="#d42222" stroke-width="2.8"/><path d="M1524.5,28 Q1523,20 1530.5,14.5" fill="none" stroke="#f39a9a" stroke-width="1.4" opacity="0.9"/></g>
<g transform="translate(0,724)"><g stroke="#5c5c5c" stroke-width="4" stroke-linecap="round" opacity="0.92"><path d="M1514.6,38.5 L1522.2,46 M1522.2,38.5 L1514.6,46"/><path d="M1529.7,38.5 L1537.3,46 M1537.3,38.5 L1529.7,46"/><path d="M1544.8,38.5 L1552.4,46 M1552.4,38.5 L1544.8,46"/></g></g>
<g transform="translate(0,724)"><path d="M1568.5,30.1 L1576.8,37.4 L1593.5,21.4" fill="none" stroke="#1faa1f" stroke-width="4.8" stroke-linecap="round" stroke-linejoin="round"/></g>
<g transform="translate(0,724)"><g fill="none" stroke="#333" stroke-width="2.9" stroke-linecap="round" stroke-linejoin="round"><path d="M1619,23.4 L1612.5,26.8 L1619,30.2"/><path d="M1627.3,23.4 L1633.8,26.8 L1627.3,30.2"/></g><path d="M1624.6,21.6 L1622.1,32" stroke="#333" stroke-width="1.8"/></g>
<text transform="translate(1610.00,768.6) scale(0.9761,1)" style="font-family:'Liberation Sans';font-size:10px;font-weight:bold;" fill="#3a3a3a" stroke="#3a3a3a" stroke-width="0.45">HTML</text>
<g transform="translate(0,724)"><g fill="none" stroke="#333" stroke-linecap="round"><path d="M1662.7,17 L1662.7,24.5" stroke-width="2.8"/><path d="M1662.7,24 L1659,30.5 Q1656.5,34.5 1654,36.8" stroke-width="1.8"/><path d="M1655,36 L1653.8,37" stroke-width="2.6"/><path d="M1662.7,24 Q1665,29 1669,29.8 L1674.5,30.6" stroke-width="1.8"/><path d="M1671.5,30.2 L1675,30.8" stroke-width="2.8"/><path d="M1658.8,31.3 Q1664,29.8 1668.5,29.7" stroke-width="1.2"/></g></g>
<text transform="translate(1655.20,768.5) scale(0.8446,1)" style="font-family:'Liberation Sans';font-size:10px;font-weight:bold;" fill="#3a3a3a" stroke="#3a3a3a" stroke-width="0.45">PDF</text>
<g transform="translate(0,724)"><circle cx="1704.4" cy="30" r="12.6" fill="none" stroke="#333" stroke-width="3.5"/><circle cx="1703.5" cy="30.6" r="6.3" fill="none" stroke="#333" stroke-width="3.4"/><path d="M1710.6,23 L1710.6,33" stroke="#333" stroke-width="3"/><rect x="1704.4" y="30.4" width="16" height="12.6" fill="#fff"/><rect x="1705.3" y="31.2" width="14.6" height="11.2" rx="0.8" fill="#333"/><path d="M1706.2,32.4 L1712.6,37.6 L1719,32.4 M1706.2,41.6 L1710.4,37 M1719,41.6 L1714.8,37" fill="none" stroke="#d6d6d6" stroke-width="0.9"/></g>
<g transform="translate(0,724)"><path d="M1742.5,23.5 L1733.4,23.5 Q1732,23.5 1732,24.9 L1732,43.2 Q1732,44.6 1733.4,44.6 L1750.8,44.6 Q1752.2,44.6 1752.2,43.2 L1752.2,34" fill="none" stroke="#333" stroke-width="2.9"/><path d="M1762.3,14.7 L1762.3,31 L1756.6,25.3 L1745.6,36.4 L1739.3,30.1 L1750.3,19.1 L1746,14.7 Z" fill="#333"/></g>
<g transform="translate(0,724)"><g fill="none" stroke="#333" stroke-linejoin="round"><path d="M1777.3,23.5 L1777.3,20 Q1777.3,19 1778.3,19 L1783.8,19 Q1784.8,19 1784.8,20 L1784.8,24 Q1784.8,25 1783.8,25 L1780.5,25" stroke-width="2.3"/><path d="M1780.5,22.5 Q1773,24.5 1774.5,30 Q1776.5,35 1787,35.3" stroke-width="4"/><path d="M1791,28.5 L1801.8,28.5 Q1802.5,28.5 1802.5,29.3 L1802.5,38.7 Q1802.5,39.5 1801.8,39.5 L1791,39.5" stroke-width="2.8"/></g><path d="M1785.3,27.5 L1795.5,35 L1785.3,41 Z" fill="#333"/></g>
<g transform="translate(0,724)"><path d="M1816.8,34.2 L1829.6,21.4 L1837,29.2 L1824.3,41.7 Z" fill="#333"/><path d="M1816.8,34.2 L1813,45.7 L1824.3,41.7 Z" fill="#333"/><path d="M1815.6,43.2 L1817.6,36.4 L1822.6,41 Z" fill="#fff"/><path d="M1831.6,19.4 L1839.2,26.6" stroke="#333" stroke-width="2"/><path d="M1836.6,15.6 L1843,22" stroke="#333" stroke-width="4.8" stroke-linecap="round"/></g>
<g transform="translate(0,724)"><path d="M1858.2,19 L1881.6,41 M1881.6,19 L1858.2,41" stroke="#2c2c2c" stroke-width="5.2" stroke-linecap="round"/></g>
<rect x="5" y="785" width="1887" height="60" fill="#fff" />
<rect x="6" y="785" width="10" height="60" fill="#e8edf6" />
<rect x="5" y="845" width="1887" height="1" fill="#c0c0c0" />
<g transform="translate(0,785)"><g fill="url(#gicon)"><path d="M27.45,6 L29.7,10.4 L33.9,11 L30.9,14.2 L31.6,18.9 L27.45,16.6 L23.3,18.9 L24,14.2 L21,11 L25.2,10.4 Z" stroke="#8a8a8a" stroke-width="0.8" stroke-linejoin="round"/><path d="M21,24.2 L27.1,24.6 L33.9,30.6 L29.2,35.6 L21,29.2 Z"/><path d="M27.5,41.2 Q28.6,41.2 28.6,42.3 Q31.9,43.6 32,48.5 L32.3,51.2 L33.9,53.8 L21,53.8 L22.6,51.2 L22.9,48.5 Q23,43.6 26.4,42.3 Q26.4,41.2 27.5,41.2 Z"/></g><rect x="39.7" y="5.6" width="14.6" height="14.8" fill="#fff" stroke="#5a5a5a" stroke-width="1.3"/></g>
<g transform="translate(0,785)"><path d="M91,49 L110,49 L104,40.6 L95,40.6 Z" fill="url(#flagsh)"/><path d="M96.6,11.4 L89,48.4" stroke="#7a7a7a" stroke-width="2.3"/><path d="M95.7,13.9 L86.4,32.8 L94.2,46.7 L105.6,34.5 Z" fill="url(#greenflag)"/></g>
<text transform="translate(131.40,820.5) scale(0.9355,1)" style="font-family:'Liberation Sans';font-size:15px;" fill="#1e1e1e" >OBJ20150005</text>
<text x="293.20" y="820.5" style="font-family:'Liberation Sans';font-size:15px;" fill="#1e1e1e" >-</text>
<text transform="translate(446.40,812.7) scale(0.9383,1)" style="font-family:'Liberation Sans';font-size:15px;" fill="#1e1e1e" >Janko Mrkvička</text>
<text transform="translate(729.50,820.5) scale(1.0100,1)" style="font-family:'Liberation Sans';font-size:15px;" fill="#1e1e1e" >9,60 €</text>
<text transform="translate(879.40,820.5) scale(1.0100,1)" style="font-family:'Liberation Sans';font-size:15px;" fill="#1e1e1e" >0,00 €</text>
<text transform="translate(1042.00,820.5) scale(1.0100,1)" style="font-family:'Liberation Sans';font-size:15px;" fill="#1e1e1e" >9,60 €</text>
<text transform="translate(1210.80,820.5) scale(0.9200,1)" style="font-family:'Liberation Sans';font-size:15px;" fill="#1e1e1e" >Čašník</text>
<text transform="translate(1323.86,820.6) scale(0.9406,1)" style="font-family:'Liberation Sans';font-size:15.5px;" fill="#1e1e1e" >15:20</text>
<text transform="translate(1366.50,820.6) scale(0.9613,1)" style="font-family:'Liberation Sans';font-size:13px;" fill="#858585" >02.Júl 2015</text>
<g transform="translate(0,785)"><ellipse cx="1533.2" cy="23" rx="10.3" ry="8.9" transform="rotate(-38 1533.2 23)" fill="none" stroke="#d42222" stroke-width="3.1"/><path d="M1527.5,19.8 L1541,26.5" stroke="#d42222" stroke-width="2.8"/><path d="M1524.5,28 Q1523,20 1530.5,14.5" fill="none" stroke="#f39a9a" stroke-width="1.4" opacity="0.9"/></g>
<g transform="translate(0,785)"><g stroke="#5c5c5c" stroke-width="4" stroke-linecap="round" opacity="0.92"><path d="M1514.6,38.5 L1522.2,46 M1522.2,38.5 L1514.6,46"/><path d="M1529.7,38.5 L1537.3,46 M1537.3,38.5 L1529.7,46"/><path d="M1544.8,38.5 L1552.4,46 M1552.4,38.5 L1544.8,46"/></g></g>
<g transform="translate(0,785)"><path d="M1568.5,30.1 L1576.8,37.4 L1593.5,21.4" fill="none" stroke="#1faa1f" stroke-width="4.8" stroke-linecap="round" stroke-linejoin="round"/></g>
<g transform="translate(0,785)"><g fill="none" stroke="#333" stroke-width="2.9" stroke-linecap="round" stroke-linejoin="round"><path d="M1619,23.4 L1612.5,26.8 L1619,30.2"/><path d="M1627.3,23.4 L1633.8,26.8 L1627.3,30.2"/></g><path d="M1624.6,21.6 L1622.1,32" stroke="#333" stroke-width="1.8"/></g>
<text transform="translate(1610.00,829.6) scale(0.9761,1)" style="font-family:'Liberation Sans';font-size:10px;font-weight:bold;" fill="#3a3a3a" stroke="#3a3a3a" stroke-width="0.45">HTML</text>
<g transform="translate(0,785)"><g fill="none" stroke="#333" stroke-linecap="round"><path d="M1662.7,17 L1662.7,24.5" stroke-width="2.8"/><path d="M1662.7,24 L1659,30.5 Q1656.5,34.5 1654,36.8" stroke-width="1.8"/><path d="M1655,36 L1653.8,37" stroke-width="2.6"/><path d="M1662.7,24 Q1665,29 1669,29.8 L1674.5,30.6" stroke-width="1.8"/><path d="M1671.5,30.2 L1675,30.8" stroke-width="2.8"/><path d="M1658.8,31.3 Q1664,29.8 1668.5,29.7" stroke-width="1.2"/></g></g>
<text transform="translate(1655.20,829.5) scale(0.8446,1)" style="font-family:'Liberation Sans';font-size:10px;font-weight:bold;" fill="#3a3a3a" stroke="#3a3a3a" stroke-width="0.45">PDF</text>
<g transform="translate(0,785)"><circle cx="1704.4" cy="30" r="12.6" fill="none" stroke="#333" stroke-width="3.5"/><circle cx="1703.5" cy="30.6" r="6.3" fill="none" stroke="#333" stroke-width="3.4"/><path d="M1710.6,23 L1710.6,33" stroke="#333" stroke-width="3"/><rect x="1704.4" y="30.4" width="16" height="12.6" fill="#fff"/><rect x="1705.3" y="31.2" width="14.6" height="11.2" rx="0.8" fill="#333"/><path d="M1706.2,32.4 L1712.6,37.6 L1719,32.4 M1706.2,41.6 L1710.4,37 M1719,41.6 L1714.8,37" fill="none" stroke="#d6d6d6" stroke-width="0.9"/></g>
<g transform="translate(0,785)"><path d="M1742.5,23.5 L1733.4,23.5 Q1732,23.5 1732,24.9 L1732,43.2 Q1732,44.6 1733.4,44.6 L1750.8,44.6 Q1752.2,44.6 1752.2,43.2 L1752.2,34" fill="none" stroke="#333" stroke-width="2.9"/><path d="M1762.3,14.7 L1762.3,31 L1756.6,25.3 L1745.6,36.4 L1739.3,30.1 L1750.3,19.1 L1746,14.7 Z" fill="#333"/></g>
<g transform="translate(0,785)"><g fill="none" stroke="#333" stroke-linejoin="round"><path d="M1777.3,23.5 L1777.3,20 Q1777.3,19 1778.3,19 L1783.8,19 Q1784.8,19 1784.8,20 L1784.8,24 Q1784.8,25 1783.8,25 L1780.5,25" stroke-width="2.3"/><path d="M1780.5,22.5 Q1773,24.5 1774.5,30 Q1776.5,35 1787,35.3" stroke-width="4"/><path d="M1791,28.5 L1801.8,28.5 Q1802.5,28.5 1802.5,29.3 L1802.5,38.7 Q1802.5,39.5 1801.8,39.5 L1791,39.5" stroke-width="2.8"/></g><path d="M1785.3,27.5 L1795.5,35 L1785.3,41 Z" fill="#333"/></g>
<g transform="translate(0,785)"><path d="M1816.8,34.2 L1829.6,21.4 L1837,29.2 L1824.3,41.7 Z" fill="#333"/><path d="M1816.8,34.2 L1813,45.7 L1824.3,41.7 Z" fill="#333"/><path d="M1815.6,43.2 L1817.6,36.4 L1822.6,41 Z" fill="#fff"/><path d="M1831.6,19.4 L1839.2,26.6" stroke="#333" stroke-width="2"/><path d="M1836.6,15.6 L1843,22" stroke="#333" stroke-width="4.8" stroke-linecap="round"/></g>
<g transform="translate(0,785)"><path d="M1858.2,19 L1881.6,41 M1881.6,19 L1858.2,41" stroke="#2c2c2c" stroke-width="5.2" stroke-linecap="round"/></g>
<rect x="5" y="358" width="1" height="485" fill="#c0c0c0"/>
<rect x="61" y="358" width="1" height="485" fill="#c0c0c0"/>
<rect x="120" y="358" width="1" height="485" fill="#c0c0c0"/>
<rect x="281" y="358" width="1" height="485" fill="#c0c0c0"/>
<rect x="435" y="358" width="1" height="485" fill="#c0c0c0"/>
<rect x="719" y="358" width="1" height="485" fill="#c0c0c0"/>
<rect x="869" y="358" width="1" height="485" fill="#c0c0c0"/>
<rect x="1031" y="358" width="1" height="485" fill="#c0c0c0"/>
<rect x="1200" y="358" width="1" height="485" fill="#c0c0c0"/>
<rect x="1313" y="358" width="1" height="485" fill="#c0c0c0"/>
<rect x="1501" y="358" width="1" height="485" fill="#c0c0c0"/>
<rect x="1560" y="358" width="1" height="485" fill="#c0c0c0"/>
<rect x="1891" y="358" width="1" height="485" fill="#c0c0c0"/>
<path d="M123,167 Q126,186 143,204" fill="none" stroke="#dedede" stroke-width="2" opacity="0.9"/>
<g stroke="#000" stroke-width="1.7" stroke-linejoin="round"><path fill="#00f5dd" d="M154,214.6 L189.5,214.6 L199,183 L199,157.5 A5.9,5.9 0 0 0 187.2,157 L187.2,152.5 A6.6,6.6 0 0 0 174,152 L174,147.5 A6.9,6.9 0 0 0 160.2,147 L160.2,137.8 A6.6,6.6 0 0 0 147,137.8 L147,172.5 L141,163 A7,6.6 0 0 0 127.5,166.5 L132.3,182.7 L140.8,197 L148.4,206.5 Z"/><path fill="none" d="M160.2,147 L160.2,163.3 M174,152 L174,163 M187.2,157 L187.2,165"/></g>
</svg></body></html>
